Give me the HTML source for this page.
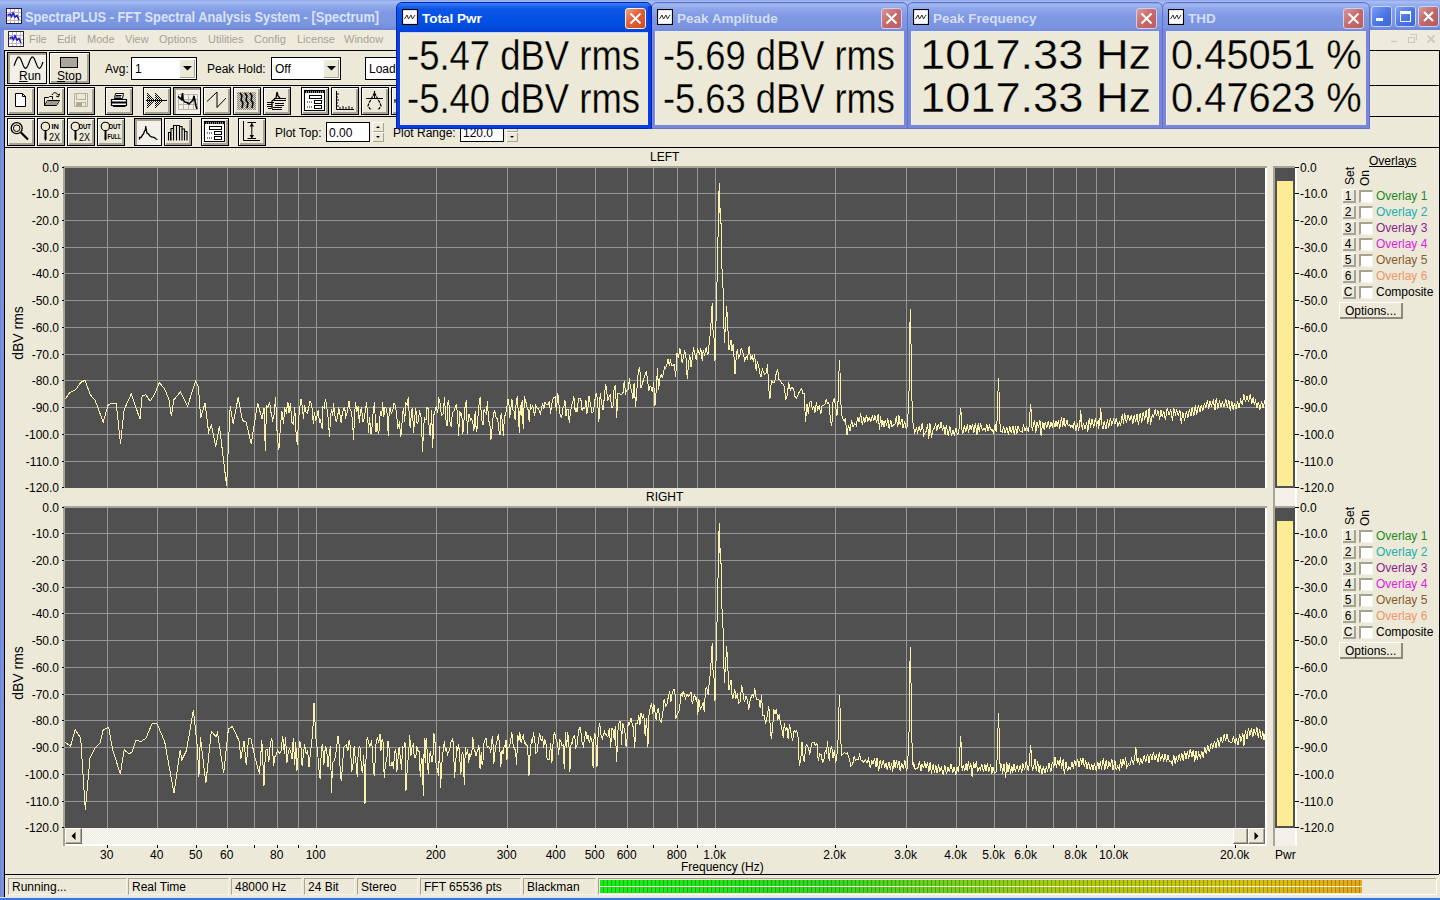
<!DOCTYPE html><html><head><meta charset="utf-8"><style>
html,body{margin:0;padding:0}
body{width:1440px;height:900px;overflow:hidden;background:#ECE9D8;position:relative;font-family:"Liberation Sans",sans-serif;}
body div{position:absolute;box-sizing:border-box}
.t{white-space:nowrap;line-height:1}
svg{position:absolute;left:0;top:0}
</style></head><body>
<div style="left:0px;top:0px;width:1440px;height:30px;background:linear-gradient(#8FA8EC 0px,#A9BEF4 2px,#93ACEC 5px,#7F9AE3 12px,#7C97E0 22px,#7690DC 27px,#6C84D3 30px)"></div>
<svg style="left:6px;top:8px" width="16" height="16" viewBox="0 0 16 16"><rect x="0.5" y="0.5" width="15" height="15" fill="#fff" stroke="#202040"/><path d="M1 4.5H15M1 8.5H15M1 12.5H15M4.5 1V15M8.5 1V15M12.5 1V15" stroke="#C8B0C0" stroke-width="1"/><path d="M1.5 7.5L4 6 5.5 8.5 7 5 9 9 11 7.5 13 12" stroke="#2020C0" stroke-width="1.6" fill="none"/></svg>
<div class="t" style="left:25px;top:10px;font-size:14px;font-weight:bold;color:#D9E3F8;transform:scaleX(0.915);transform-origin:0 0">SpectraPLUS - FFT Spectral Analysis System - [Spectrum]</div>
<div style="left:1371px;top:6px;width:21px;height:21px;border-radius:3px;border:1px solid #C8D4F8;background:linear-gradient(135deg,#7EA0F0,#4D78E6 50%,#3C64D8)">
<div style="left:4px;top:11px;width:7px;height:3px;background:#fff"></div>
</div>
<div style="left:1395px;top:6px;width:21px;height:21px;border-radius:3px;border:1px solid #C8D4F8;background:linear-gradient(135deg,#7EA0F0,#4D78E6 50%,#3C64D8)">
<div style="left:4px;top:4px;width:11px;height:11px;border:1px solid #fff;border-top:3px solid #fff"></div>
</div>
<div style="left:1418px;top:6px;width:21px;height:21px;border-radius:3px;border:1px solid #C8D4F8;background:linear-gradient(135deg,#D49A9A,#C06868 50%,#B85858)">
<svg width="19" height="19" style="left:0;top:0"><path d="M5 5L14 14M14 5L5 14" stroke="#fff" stroke-width="2.2"/></svg>
</div>
<div style="left:0px;top:30px;width:4px;height:870px;background:linear-gradient(90deg,#6A80D6,#8096E0 50%,#7088DA)"></div>
<div style="left:0px;top:897px;width:1440px;height:1px;background:#D8E4F4"></div>
<div style="left:0px;top:898px;width:1440px;height:2px;background:#3A78DC"></div>
<div style="left:4px;top:30px;width:1436px;height:20px;background:#EEEBDD"></div>
<svg style="left:8px;top:31px" width="16" height="16" viewBox="0 0 16 16"><rect x="0.5" y="0.5" width="15" height="15" fill="#fff" stroke="#202040"/><path d="M1 4.5H15M1 8.5H15M1 12.5H15M4.5 1V15M8.5 1V15M12.5 1V15" stroke="#C8B0C0" stroke-width="1"/><path d="M1.5 7.5L4 6 5.5 8.5 7 5 9 9 11 7.5 13 12" stroke="#2020C0" stroke-width="1.6" fill="none"/></svg>
<div class="t" style="left:29px;top:34px;font-size:11px;color:#A6A293">File</div>
<div class="t" style="left:57px;top:34px;font-size:11px;color:#A6A293">Edit</div>
<div class="t" style="left:87px;top:34px;font-size:11px;color:#A6A293">Mode</div>
<div class="t" style="left:125px;top:34px;font-size:11px;color:#A6A293">View</div>
<div class="t" style="left:159px;top:34px;font-size:11px;color:#A6A293">Options</div>
<div class="t" style="left:208px;top:34px;font-size:11px;color:#A6A293">Utilities</div>
<div class="t" style="left:254px;top:34px;font-size:11px;color:#A6A293">Config</div>
<div class="t" style="left:297px;top:34px;font-size:11px;color:#A6A293">License</div>
<div class="t" style="left:344px;top:34px;font-size:11px;color:#A6A293">Window</div>
<svg style="left:1380px;top:28px" width="60" height="16"><path d="M11 13.5H17" stroke="#CFCBBC" stroke-width="1.5"/><path d="M30.5 6.5H36.5V12.5M28.5 9.5H34.5V14.5H28.5Z" stroke="#CFCBBC" fill="none" stroke-width="1.2"/><path d="M47.5 7.5L54.5 14.5M54.5 7.5L47.5 14.5" stroke="#CFCBBC" stroke-width="1.8"/></svg>
<div style="left:4px;top:50px;width:1436px;height:1px;background:#000"></div>
<div style="left:4px;top:50px;width:1px;height:847px;background:#000"></div>
<div style="left:1439px;top:50px;width:1px;height:824px;background:#000"></div>
<div style="left:5px;top:85px;width:1434px;height:1px;background:#000"></div>
<div style="left:5px;top:116px;width:1434px;height:1px;background:#000"></div>
<div style="left:5px;top:147px;width:1434px;height:1px;background:#000"></div>
<div style="left:5px;top:874px;width:1434px;height:1px;background:#000"></div>
<div style="left:7px;top:52px;width:40px;height:32px;border:1px solid #000;box-shadow:inset 2px 2px 0 #A7A392;background:#F2F0E8"></div>
<svg style="left:13px;top:55px" width="32" height="16"><path d="M1.0 10.73 L1.5 9.58 L2.0 8.33 L2.5 7.04 L3.0 5.78 L3.5 4.62 L4.0 3.62 L4.5 2.83 L5.0 2.29 L5.5 2.02 L6.0 2.05 L6.5 2.37 L7.0 2.97 L7.5 3.81 L8.0 4.84 L8.5 6.03 L9.0 7.30 L9.5 8.58 L10.0 9.82 L10.5 10.94 L11.0 11.90 L11.5 12.63 L12.0 13.11 L12.5 13.30 L13.0 13.19 L13.5 12.80 L14.0 12.14 L14.5 11.25 L15.0 10.17 L15.5 8.96 L16.0 7.68 L16.5 6.40 L17.0 5.19 L17.5 4.10 L18.0 3.20 L18.5 2.52 L19.0 2.12 L19.5 2.00 L20.0 2.18 L20.5 2.64 L21.0 3.36 L21.5 4.30 L22.0 5.42 L22.5 6.65 L23.0 7.94 L23.5 9.21 L24.0 10.40 L24.5 11.45 L25.0 12.30 L25.5 12.90 L26.0 13.24 L26.5 13.28 L27.0 13.03 L27.5 12.50 L28.0 11.72 L28.5 10.73 L29.0 9.58 L29.5 8.33 L30.0 7.04" stroke="#000" stroke-width="1.2" fill="none"/></svg>
<div class="t" style="left:19px;top:70px;font-size:12px;color:#000"><u>R</u>un</div>
<div style="left:49px;top:52px;width:41px;height:32px;border:1px solid #000;box-shadow:inset 1px 1px 0 #fff,inset -2px -2px 0 #A7A392;background:#ECE9D8"></div>
<div style="left:60px;top:57px;width:18px;height:11px;border:1px solid #000;background:#A9A598"></div>
<div class="t" style="left:57px;top:70px;font-size:12px;color:#000"><u>S</u>top</div>
<div class="t" style="left:105px;top:63px;font-size:12px;color:#000">Avg:</div>
<div style="left:131px;top:57px;width:66px;height:23px;border:1px solid #000;background:#fff"></div>
<div class="t" style="left:135px;top:63px;font-size:12px;color:#000">1</div>
<div style="left:179px;top:59px;width:16px;height:19px;background:#ECE9D8;box-shadow:inset 1px 1px 0 #fff,inset -1px -1px 0 #A7A392"></div>
<svg style="left:183px;top:66px" width="9" height="5"><path d="M0 0H9L4.5 4.5Z" fill="#000"/></svg>
<div class="t" style="left:207px;top:63px;font-size:12px;color:#000">Peak Hold:</div>
<div style="left:271px;top:57px;width:70px;height:23px;border:1px solid #000;background:#fff"></div>
<div class="t" style="left:275px;top:63px;font-size:12px;color:#000">Off</div>
<div style="left:323px;top:59px;width:16px;height:19px;background:#ECE9D8;box-shadow:inset 1px 1px 0 #fff,inset -1px -1px 0 #A7A392"></div>
<svg style="left:327px;top:66px" width="9" height="5"><path d="M0 0H9L4.5 4.5Z" fill="#000"/></svg>
<div style="left:365px;top:57px;width:40px;height:23px;border:1px solid #000;background:#fff"></div>
<div class="t" style="left:369px;top:63px;font-size:12px;color:#000">Load</div>
<svg style="left:0px;top:0px" width="1" height="1" viewBox="0 0 1 1"><defs><pattern id="dith" width="2" height="2" patternUnits="userSpaceOnUse"><rect width="1" height="1" fill="#000"/><rect x="1" y="1" width="1" height="1" fill="#000"/></pattern><pattern id="dithg" width="2" height="2" patternUnits="userSpaceOnUse"><rect width="2" height="2" fill="#D8D4C8"/><rect width="1" height="1" fill="#8C8A80"/><rect x="1" y="1" width="1" height="1" fill="#8C8A80"/></pattern></defs></svg>
<div style="left:7px;top:87px;width:28px;height:28px;border:1px solid #000;box-shadow:inset 1px 1px 0 #fff,inset -2px -2px 0 #A7A392;background:#ECE9D8"></div>
<div style="left:37px;top:87px;width:28px;height:28px;border:1px solid #000;box-shadow:inset 1px 1px 0 #fff,inset -2px -2px 0 #A7A392;background:#ECE9D8"></div>
<div style="left:67px;top:87px;width:28px;height:28px;border:1px solid #000;box-shadow:inset 1px 1px 0 #fff,inset -2px -2px 0 #A7A392;background:#ECE9D8"></div>
<div style="left:105px;top:87px;width:28px;height:28px;border:1px solid #000;box-shadow:inset 1px 1px 0 #fff,inset -2px -2px 0 #A7A392;background:#ECE9D8"></div>
<div style="left:143px;top:87px;width:28px;height:28px;border:1px solid #000;box-shadow:inset 1px 1px 0 #fff,inset -2px -2px 0 #A7A392;background:#ECE9D8"></div>
<div style="left:173px;top:87px;width:28px;height:28px;border:1px solid #000;box-shadow:inset 2px 2px 0 #A7A392;background:#F2F0E8"></div>
<div style="left:203px;top:87px;width:28px;height:28px;border:1px solid #000;box-shadow:inset 1px 1px 0 #fff,inset -2px -2px 0 #A7A392;background:#ECE9D8"></div>
<div style="left:233px;top:87px;width:28px;height:28px;border:1px solid #000;box-shadow:inset 1px 1px 0 #fff,inset -2px -2px 0 #A7A392;background:#ECE9D8"></div>
<div style="left:263px;top:87px;width:28px;height:28px;border:1px solid #000;box-shadow:inset 1px 1px 0 #fff,inset -2px -2px 0 #A7A392;background:#ECE9D8"></div>
<div style="left:301px;top:87px;width:28px;height:28px;border:1px solid #000;box-shadow:inset 1px 1px 0 #fff,inset -2px -2px 0 #A7A392;background:#ECE9D8"></div>
<div style="left:331px;top:87px;width:28px;height:28px;border:1px solid #000;box-shadow:inset 1px 1px 0 #fff,inset -2px -2px 0 #A7A392;background:#ECE9D8"></div>
<div style="left:361px;top:87px;width:28px;height:28px;border:1px solid #000;box-shadow:inset 1px 1px 0 #fff,inset -2px -2px 0 #A7A392;background:#ECE9D8"></div>
<div style="left:391px;top:87px;width:28px;height:28px;border:1px solid #000;box-shadow:inset 1px 1px 0 #fff,inset -2px -2px 0 #A7A392;background:#ECE9D8"></div>
<div style="left:7px;top:118px;width:28px;height:28px;border:1px solid #000;box-shadow:inset 1px 1px 0 #fff,inset -2px -2px 0 #A7A392;background:#ECE9D8"></div>
<div style="left:37px;top:118px;width:28px;height:28px;border:1px solid #000;box-shadow:inset 1px 1px 0 #fff,inset -2px -2px 0 #A7A392;background:#ECE9D8"></div>
<div style="left:67px;top:118px;width:28px;height:28px;border:1px solid #000;box-shadow:inset 1px 1px 0 #fff,inset -2px -2px 0 #A7A392;background:#ECE9D8"></div>
<div style="left:97px;top:118px;width:28px;height:28px;border:1px solid #000;box-shadow:inset 1px 1px 0 #fff,inset -2px -2px 0 #A7A392;background:#ECE9D8"></div>
<div style="left:134px;top:118px;width:28px;height:28px;border:1px solid #000;box-shadow:inset 2px 2px 0 #A7A392;background:#F2F0E8"></div>
<div style="left:164px;top:118px;width:28px;height:28px;border:1px solid #000;box-shadow:inset 1px 1px 0 #fff,inset -2px -2px 0 #A7A392;background:#ECE9D8"></div>
<div style="left:201px;top:118px;width:28px;height:28px;border:1px solid #000;box-shadow:inset 1px 1px 0 #fff,inset -2px -2px 0 #A7A392;background:#ECE9D8"></div>
<div style="left:238px;top:118px;width:28px;height:28px;border:1px solid #000;box-shadow:inset 1px 1px 0 #fff,inset -2px -2px 0 #A7A392;background:#ECE9D8"></div>
<svg style="left:7px;top:87px" width="28" height="28" viewBox="0 0 28 28"><path d="M8.5 6.5H15.5L18.5 9.5V19.5H8.5Z" fill="#fff" stroke="#000"/><path d="M15.5 6.5V9.5H18.5" stroke="#000" fill="none" stroke-width="1"/></svg>
<svg style="left:37px;top:87px" width="28" height="28" viewBox="0 0 28 28"><path d="M7.5 10.5H11.5L12.5 9.5H15.5V12.5" fill="none" stroke="#000"/><path d="M7.5 10.5V18.5L10.5 13.5H22.5L19.5 18.5H7.5" fill="#fff" stroke="#000"/><path d="M8.5 18L11 14H22L19 18Z" fill="#9E9A8C"/><path d="M15 8C16 5 20 5 21 8L22.5 7L21.5 10L19 9" stroke="#000" fill="none" stroke-width="1"/></svg>
<svg style="left:67px;top:87px" width="28" height="28" viewBox="0 0 28 28"><path d="M7.5 6.5H20.5V19.5H7.5Z" fill="none" stroke="#B4B0A2"/><path d="M9.5 6.5V12.5H18.5V6.5M9.5 19.5V15.5H18.5V19.5" fill="none" stroke="#B4B0A2"/><rect x="10" y="16" width="5" height="3" fill="#A8A496"/></svg>
<svg style="left:105px;top:87px" width="28" height="28" viewBox="0 0 28 28"><path d="M10.5 6.5H18.5L17.5 11.5H9.5Z" fill="#fff" stroke="#000"/><path d="M11 8.5H16.5M10.5 10H16" stroke="#000"/><path d="M6.5 12.5H21.5V18.5H6.5Z" fill="#fff" stroke="#000" stroke-width="1.2"/><path d="M7 15.5H21" stroke="#000" stroke-width="2"/><path d="M8 19.5H20.5" stroke="#000"/></svg>
<svg style="left:143px;top:87px" width="28" height="28" viewBox="0 0 28 28"><path d="M4 5L12 13.5 4 22Z" fill="url(#dith)"/><path d="M12 5L20 13.5 12 22Z" fill="url(#dith)"/><path d="M3 13.5H24" stroke="#000"/></svg>
<svg style="left:173px;top:87px" width="28" height="28" viewBox="0 0 28 28"><path d="M5.5 7.5H24.5V22.5H5.5ZM5.5 12.5H24.5M5.5 17.5H24.5M10.5 7.5V22.5M15.5 7.5V22.5M20.5 7.5V22.5" fill="none" stroke="#B8B4A4"/><path d="M5 9.5L7 11 8.5 12.5 9.5 6 10 13 12 15 14 15.5 16 17 18 15 20 13 21 9 22 14 23 19 24 22" stroke="#000" stroke-width="1.6" fill="none"/></svg>
<svg style="left:203px;top:87px" width="28" height="28" viewBox="0 0 28 28"><path d="M4 14.5L14 5V20.5L23 11" stroke="#000" fill="none" stroke-width="1"/></svg>
<svg style="left:233px;top:87px" width="28" height="28" viewBox="0 0 28 28"><rect x="4" y="5" width="19" height="18" fill="url(#dithg)"/><path d="M7 6L9 9 8 13 10 16 9 21M12 6L14 9 13 13 15 16 14 21M17 6L19 9 18 13 20 16 19 21" stroke="#000" stroke-width="1.5" fill="none"/></svg>
<svg style="left:263px;top:87px" width="28" height="28" viewBox="0 0 28 28"><path d="M4 15.5H11M4 17.5H9M4 19.5H9M5 21.5H8M11 11.5H23M11 13.5H23M12 16.5H21M12 18.5H21M10 20.5H19M9 22.5H19" stroke="#000"/><path d="M9 22V14L13 11 14 5 15 9 17 11" stroke="#000" fill="none" stroke-width="1.3"/></svg>
<svg style="left:301px;top:87px" width="28" height="28" viewBox="0 0 28 28"><rect x="3.5" y="3.5" width="20" height="20" fill="#fff" stroke="#000"/><rect x="4" y="4" width="19" height="2" fill="#000"/><path d="M5 5H22" stroke="#fff" stroke-dasharray="1 1"/><rect x="8.5" y="8.5" width="12" height="3" fill="none" stroke="#000"/><rect x="13.5" y="13.5" width="7" height="3" fill="none" stroke="#000"/><rect x="13.5" y="18.5" width="7" height="3" fill="none" stroke="#000"/><path d="M6 15H11M6 20H11" stroke="#000" stroke-dasharray="1 1"/></svg>
<svg style="left:201px;top:118px" width="28" height="28" viewBox="0 0 28 28"><rect x="3.5" y="3.5" width="20" height="20" fill="#fff" stroke="#000"/><rect x="4" y="4" width="19" height="2" fill="#000"/><path d="M5 5H22" stroke="#fff" stroke-dasharray="1 1"/><rect x="8.5" y="8.5" width="12" height="3" fill="none" stroke="#000"/><rect x="13.5" y="13.5" width="7" height="3" fill="none" stroke="#000"/><rect x="13.5" y="18.5" width="7" height="3" fill="none" stroke="#000"/><path d="M6 15H11M6 20H11" stroke="#000" stroke-dasharray="1 1"/></svg>
<svg style="left:331px;top:87px" width="28" height="28" viewBox="0 0 28 28"><path d="M5.5 4V22.5H23" stroke="#000" fill="none" stroke-width="1"/><path d="M5 7H8M5 10H7M5 13H8M5 16H7M5 19H8M9 22V20M12 22V19M15 22V20M18 22V19M21 22V20" stroke="#000"/></svg>
<svg style="left:361px;top:87px" width="28" height="28" viewBox="0 0 28 28"><path d="M13.5 4V12M5 11.5H22" stroke="#000" stroke-width="1.2"/><path d="M13.5 6L8 16 7 19 9 22 11 22M13.5 6L19 16 20 19 18 22 16 22" stroke="#000" stroke-width="1.2" fill="none" stroke-dasharray="3 1"/></svg>
<svg style="left:391px;top:87px" width="5" height="28" viewBox="0 0 5 28"><path d="M3 13H5M4 13V16" stroke="#000"/></svg>
<svg style="left:7px;top:118px" width="28" height="28" viewBox="0 0 28 28"><circle cx="9.7" cy="10.2" r="5.5" fill="none" stroke="#000" stroke-width="1.3"/><circle cx="9.7" cy="10.2" r="3.3" fill="none" stroke="#000"/><path d="M14 14.5L21 21.5" stroke="#000" stroke-width="2.2"/></svg>
<svg style="left:37px;top:118px" width="28" height="28" viewBox="0 0 28 28"><circle cx="8.4" cy="8.4" r="4.2" fill="none" stroke="#000" stroke-width="1.1"/><path d="M7.6 13H9.4L9.6 21L8.5 23L7.4 21Z" fill="#000"/><text x="14.5" y="11" textLength="7.5" lengthAdjust="spacingAndGlyphs" font-family="Liberation Sans" font-weight="bold" font-size="6.5">IN</text><text x="12" y="22.5" textLength="11" lengthAdjust="spacingAndGlyphs" font-family="Liberation Sans" font-size="11">2X</text></svg>
<svg style="left:67px;top:118px" width="28" height="28" viewBox="0 0 28 28"><circle cx="8.4" cy="8.4" r="4.2" fill="none" stroke="#000" stroke-width="1.1"/><path d="M7.6 13H9.4L9.6 21L8.5 23L7.4 21Z" fill="#000"/><text x="11.5" y="11" textLength="12.5" lengthAdjust="spacingAndGlyphs" font-family="Liberation Sans" font-weight="bold" font-size="6.5">OUT</text><text x="12" y="22.5" textLength="11" lengthAdjust="spacingAndGlyphs" font-family="Liberation Sans" font-size="11">2X</text></svg>
<svg style="left:97px;top:118px" width="28" height="28" viewBox="0 0 28 28"><circle cx="8.4" cy="8.4" r="4.2" fill="none" stroke="#000" stroke-width="1.1"/><path d="M7.6 13H9.4L9.6 21L8.5 23L7.4 21Z" fill="#000"/><text x="11.5" y="11" textLength="12.5" lengthAdjust="spacingAndGlyphs" font-family="Liberation Sans" font-weight="bold" font-size="6.5">OUT</text><text x="10.5" y="20.5" textLength="13.5" lengthAdjust="spacingAndGlyphs" font-family="Liberation Sans" font-weight="bold" font-size="6.5">FULL</text></svg>
<svg style="left:134px;top:118px" width="28" height="28" viewBox="0 0 28 28"><path d="M5.5 21.5V19.5H7L8.5 17 9.5 16 10.5 13 11.5 11.5 11.7 8 12.3 12 13 15 14.5 16 16 18 17.5 19 20.5 19.5 22 21 23.5 21.5" stroke="#000" stroke-width="1.3" fill="none"/></svg>
<svg style="left:164px;top:118px" width="28" height="28" viewBox="0 0 28 28"><path d="M4.5 22.5V14.5H6.5V22.5M7 22.5V10.5H9.5V22.5M9.5 22.5V7.5H12.5V22.5M12.5 22.5V7.5H15.5V22.5M15.5 22.5V8.5H18V22.5M18 22.5V11H20.5V22.5M20.5 22.5V13.5H23V22.5" stroke="#000" fill="none" stroke-width="1.1"/></svg>
<svg style="left:238px;top:118px" width="28" height="28" viewBox="0 0 28 28"><path d="M5.5 3V22.5H22" stroke="#000" fill="none" stroke-width="1"/><path d="M9.5 4.5H18M9.5 20.5H18M13.8 5V20" stroke="#000"/><path d="M11.5 8.5L13.8 5 16 8.5ZM11.5 17L13.8 20.5 16 17Z" fill="#000"/></svg>
<div class="t" style="left:275px;top:127px;font-size:12px;color:#000">Plot Top:</div>
<div style="left:326px;top:122px;width:44px;height:20px;border:1px solid #000;background:#fff"></div>
<div class="t" style="left:329px;top:127px;font-size:12px;color:#000">0.00</div>
<div style="left:372px;top:122px;width:12px;height:10px;background:#ECE9D8;box-shadow:inset 1px 1px 0 #fff,inset -1px -1px 0 #A7A392"></div>
<div style="left:372px;top:132px;width:12px;height:10px;background:#ECE9D8;box-shadow:inset 1px 1px 0 #fff,inset -1px -1px 0 #A7A392"></div>
<svg style="left:372px;top:122px" width="12" height="20" viewBox="0 0 12 20"><path d="M4 6H8L6 4Z M4 14H8L6 16Z" fill="#000"/></svg>
<div class="t" style="left:393px;top:127px;font-size:12px;color:#000">Plot Range:</div>
<div style="left:460px;top:122px;width:44px;height:20px;border:1px solid #000;background:#fff"></div>
<div class="t" style="left:463px;top:127px;font-size:12px;color:#000">120.0</div>
<div style="left:506px;top:122px;width:12px;height:10px;background:#ECE9D8;box-shadow:inset 1px 1px 0 #fff,inset -1px -1px 0 #A7A392"></div>
<div style="left:506px;top:132px;width:12px;height:10px;background:#ECE9D8;box-shadow:inset 1px 1px 0 #fff,inset -1px -1px 0 #A7A392"></div>
<svg style="left:506px;top:122px" width="12" height="20" viewBox="0 0 12 20"><path d="M4 6H8L6 4Z M4 14H8L6 16Z" fill="#000"/></svg>
<div style="left:8px;top:878px;width:119px;height:17px;border-top:1px solid #A7A392;border-left:1px solid #A7A392;border-right:1px solid #F6F4EE;border-bottom:1px solid #F6F4EE"></div>
<div class="t" style="left:12px;top:881px;font-size:12px;color:#000">Running...</div>
<div style="left:128px;top:878px;width:101px;height:17px;border-top:1px solid #A7A392;border-left:1px solid #A7A392;border-right:1px solid #F6F4EE;border-bottom:1px solid #F6F4EE"></div>
<div class="t" style="left:132px;top:881px;font-size:12px;color:#000">Real Time</div>
<div style="left:231px;top:878px;width:71px;height:17px;border-top:1px solid #A7A392;border-left:1px solid #A7A392;border-right:1px solid #F6F4EE;border-bottom:1px solid #F6F4EE"></div>
<div class="t" style="left:235px;top:881px;font-size:12px;color:#000">48000 Hz</div>
<div style="left:304px;top:878px;width:51px;height:17px;border-top:1px solid #A7A392;border-left:1px solid #A7A392;border-right:1px solid #F6F4EE;border-bottom:1px solid #F6F4EE"></div>
<div class="t" style="left:308px;top:881px;font-size:12px;color:#000">24 Bit</div>
<div style="left:357px;top:878px;width:61px;height:17px;border-top:1px solid #A7A392;border-left:1px solid #A7A392;border-right:1px solid #F6F4EE;border-bottom:1px solid #F6F4EE"></div>
<div class="t" style="left:361px;top:881px;font-size:12px;color:#000">Stereo</div>
<div style="left:420px;top:878px;width:101px;height:17px;border-top:1px solid #A7A392;border-left:1px solid #A7A392;border-right:1px solid #F6F4EE;border-bottom:1px solid #F6F4EE"></div>
<div class="t" style="left:424px;top:881px;font-size:12px;color:#000">FFT 65536 pts</div>
<div style="left:523px;top:878px;width:73px;height:17px;border-top:1px solid #A7A392;border-left:1px solid #A7A392;border-right:1px solid #F6F4EE;border-bottom:1px solid #F6F4EE"></div>
<div class="t" style="left:527px;top:881px;font-size:12px;color:#000">Blackman</div>
<div style="left:598px;top:878px;width:839px;height:17px;border-top:1px solid #A7A392;border-left:1px solid #A7A392;border-right:1px solid #fff;border-bottom:1px solid #fff"></div>
<div style="left:600px;top:880px;width:762px;height:13px;background:linear-gradient(90deg,#14F014 0%,#30D820 30%,#A8CC10 60%,#D8C010 85%,#E8A818 100%)"></div>
<div style="left:600px;top:880px;width:762px;height:13px;background:repeating-linear-gradient(90deg,rgba(0,0,0,0) 0px,rgba(0,0,0,0) 3px,rgba(40,60,0,0.35) 3px,rgba(40,60,0,0.35) 4px)"></div>
<div style="left:600px;top:886px;width:762px;height:1px;background:#F4F8E0"></div>
<div style="left:63px;top:166px;width:1204px;height:322px;background:#fff;border-top:2px solid #A8A498;border-left:2px solid #A8A498"></div>
<div style="left:65px;top:168px;width:1200px;height:320px;background:#505050"></div>
<div style="left:65px;top:193px;width:1200px;height:1px;background:#969696"></div>
<div style="left:65px;top:220px;width:1200px;height:1px;background:#969696"></div>
<div style="left:65px;top:247px;width:1200px;height:1px;background:#969696"></div>
<div style="left:65px;top:273px;width:1200px;height:1px;background:#969696"></div>
<div style="left:65px;top:300px;width:1200px;height:1px;background:#969696"></div>
<div style="left:65px;top:327px;width:1200px;height:1px;background:#969696"></div>
<div style="left:65px;top:354px;width:1200px;height:1px;background:#969696"></div>
<div style="left:65px;top:380px;width:1200px;height:1px;background:#969696"></div>
<div style="left:65px;top:407px;width:1200px;height:1px;background:#969696"></div>
<div style="left:65px;top:434px;width:1200px;height:1px;background:#969696"></div>
<div style="left:65px;top:461px;width:1200px;height:1px;background:#969696"></div>
<div style="left:107px;top:168px;width:1px;height:320px;background:#969696"></div>
<div style="left:157px;top:168px;width:1px;height:320px;background:#969696"></div>
<div style="left:196px;top:168px;width:1px;height:320px;background:#969696"></div>
<div style="left:227px;top:168px;width:1px;height:320px;background:#969696"></div>
<div style="left:254px;top:168px;width:1px;height:320px;background:#969696"></div>
<div style="left:277px;top:168px;width:1px;height:320px;background:#969696"></div>
<div style="left:298px;top:168px;width:1px;height:320px;background:#969696"></div>
<div style="left:316px;top:168px;width:1px;height:320px;background:#969696"></div>
<div style="left:436px;top:168px;width:1px;height:320px;background:#969696"></div>
<div style="left:507px;top:168px;width:1px;height:320px;background:#969696"></div>
<div style="left:556px;top:168px;width:1px;height:320px;background:#969696"></div>
<div style="left:595px;top:168px;width:1px;height:320px;background:#969696"></div>
<div style="left:627px;top:168px;width:1px;height:320px;background:#969696"></div>
<div style="left:653px;top:168px;width:1px;height:320px;background:#969696"></div>
<div style="left:677px;top:168px;width:1px;height:320px;background:#969696"></div>
<div style="left:697px;top:168px;width:1px;height:320px;background:#969696"></div>
<div style="left:715px;top:168px;width:1px;height:320px;background:#969696"></div>
<div style="left:835px;top:168px;width:1px;height:320px;background:#969696"></div>
<div style="left:906px;top:168px;width:1px;height:320px;background:#969696"></div>
<div style="left:956px;top:168px;width:1px;height:320px;background:#969696"></div>
<div style="left:994px;top:168px;width:1px;height:320px;background:#969696"></div>
<div style="left:1026px;top:168px;width:1px;height:320px;background:#969696"></div>
<div style="left:1053px;top:168px;width:1px;height:320px;background:#969696"></div>
<div style="left:1076px;top:168px;width:1px;height:320px;background:#969696"></div>
<div style="left:1096px;top:168px;width:1px;height:320px;background:#969696"></div>
<div style="left:1114px;top:168px;width:1px;height:320px;background:#969696"></div>
<div style="left:1235px;top:168px;width:1px;height:320px;background:#969696"></div>
<div style="left:62px;top:167px;width:2px;height:1px;background:#000"></div>
<div class="t" style="left:0px;width:59px;text-align:right;top:162px;font-size:12px;color:#000">0.0</div>
<div style="left:62px;top:193px;width:2px;height:1px;background:#000"></div>
<div class="t" style="left:0px;width:59px;text-align:right;top:188px;font-size:12px;color:#000">-10.0</div>
<div style="left:62px;top:220px;width:2px;height:1px;background:#000"></div>
<div class="t" style="left:0px;width:59px;text-align:right;top:215px;font-size:12px;color:#000">-20.0</div>
<div style="left:62px;top:247px;width:2px;height:1px;background:#000"></div>
<div class="t" style="left:0px;width:59px;text-align:right;top:242px;font-size:12px;color:#000">-30.0</div>
<div style="left:62px;top:273px;width:2px;height:1px;background:#000"></div>
<div class="t" style="left:0px;width:59px;text-align:right;top:268px;font-size:12px;color:#000">-40.0</div>
<div style="left:62px;top:300px;width:2px;height:1px;background:#000"></div>
<div class="t" style="left:0px;width:59px;text-align:right;top:295px;font-size:12px;color:#000">-50.0</div>
<div style="left:62px;top:327px;width:2px;height:1px;background:#000"></div>
<div class="t" style="left:0px;width:59px;text-align:right;top:322px;font-size:12px;color:#000">-60.0</div>
<div style="left:62px;top:354px;width:2px;height:1px;background:#000"></div>
<div class="t" style="left:0px;width:59px;text-align:right;top:349px;font-size:12px;color:#000">-70.0</div>
<div style="left:62px;top:380px;width:2px;height:1px;background:#000"></div>
<div class="t" style="left:0px;width:59px;text-align:right;top:375px;font-size:12px;color:#000">-80.0</div>
<div style="left:62px;top:407px;width:2px;height:1px;background:#000"></div>
<div class="t" style="left:0px;width:59px;text-align:right;top:402px;font-size:12px;color:#000">-90.0</div>
<div style="left:62px;top:434px;width:2px;height:1px;background:#000"></div>
<div class="t" style="left:0px;width:59px;text-align:right;top:429px;font-size:12px;color:#000">-100.0</div>
<div style="left:62px;top:461px;width:2px;height:1px;background:#000"></div>
<div class="t" style="left:0px;width:59px;text-align:right;top:456px;font-size:12px;color:#000">-110.0</div>
<div style="left:62px;top:487px;width:2px;height:1px;background:#000"></div>
<div class="t" style="left:0px;width:59px;text-align:right;top:482px;font-size:12px;color:#000">-120.0</div>
<div class="t" style="left:-17px;top:326px;width:70px;height:14px;text-align:center;font-size:14px;color:#000;transform:rotate(-90deg)">dBV rms</div>
<div style="left:63px;top:506px;width:1204px;height:322px;background:#fff;border-top:2px solid #A8A498;border-left:2px solid #A8A498"></div>
<div style="left:65px;top:508px;width:1200px;height:320px;background:#505050"></div>
<div style="left:65px;top:533px;width:1200px;height:1px;background:#969696"></div>
<div style="left:65px;top:560px;width:1200px;height:1px;background:#969696"></div>
<div style="left:65px;top:587px;width:1200px;height:1px;background:#969696"></div>
<div style="left:65px;top:613px;width:1200px;height:1px;background:#969696"></div>
<div style="left:65px;top:640px;width:1200px;height:1px;background:#969696"></div>
<div style="left:65px;top:667px;width:1200px;height:1px;background:#969696"></div>
<div style="left:65px;top:694px;width:1200px;height:1px;background:#969696"></div>
<div style="left:65px;top:720px;width:1200px;height:1px;background:#969696"></div>
<div style="left:65px;top:747px;width:1200px;height:1px;background:#969696"></div>
<div style="left:65px;top:774px;width:1200px;height:1px;background:#969696"></div>
<div style="left:65px;top:801px;width:1200px;height:1px;background:#969696"></div>
<div style="left:107px;top:508px;width:1px;height:320px;background:#969696"></div>
<div style="left:157px;top:508px;width:1px;height:320px;background:#969696"></div>
<div style="left:196px;top:508px;width:1px;height:320px;background:#969696"></div>
<div style="left:227px;top:508px;width:1px;height:320px;background:#969696"></div>
<div style="left:254px;top:508px;width:1px;height:320px;background:#969696"></div>
<div style="left:277px;top:508px;width:1px;height:320px;background:#969696"></div>
<div style="left:298px;top:508px;width:1px;height:320px;background:#969696"></div>
<div style="left:316px;top:508px;width:1px;height:320px;background:#969696"></div>
<div style="left:436px;top:508px;width:1px;height:320px;background:#969696"></div>
<div style="left:507px;top:508px;width:1px;height:320px;background:#969696"></div>
<div style="left:556px;top:508px;width:1px;height:320px;background:#969696"></div>
<div style="left:595px;top:508px;width:1px;height:320px;background:#969696"></div>
<div style="left:627px;top:508px;width:1px;height:320px;background:#969696"></div>
<div style="left:653px;top:508px;width:1px;height:320px;background:#969696"></div>
<div style="left:677px;top:508px;width:1px;height:320px;background:#969696"></div>
<div style="left:697px;top:508px;width:1px;height:320px;background:#969696"></div>
<div style="left:715px;top:508px;width:1px;height:320px;background:#969696"></div>
<div style="left:835px;top:508px;width:1px;height:320px;background:#969696"></div>
<div style="left:906px;top:508px;width:1px;height:320px;background:#969696"></div>
<div style="left:956px;top:508px;width:1px;height:320px;background:#969696"></div>
<div style="left:994px;top:508px;width:1px;height:320px;background:#969696"></div>
<div style="left:1026px;top:508px;width:1px;height:320px;background:#969696"></div>
<div style="left:1053px;top:508px;width:1px;height:320px;background:#969696"></div>
<div style="left:1076px;top:508px;width:1px;height:320px;background:#969696"></div>
<div style="left:1096px;top:508px;width:1px;height:320px;background:#969696"></div>
<div style="left:1114px;top:508px;width:1px;height:320px;background:#969696"></div>
<div style="left:1235px;top:508px;width:1px;height:320px;background:#969696"></div>
<div style="left:62px;top:507px;width:2px;height:1px;background:#000"></div>
<div class="t" style="left:0px;width:59px;text-align:right;top:502px;font-size:12px;color:#000">0.0</div>
<div style="left:62px;top:533px;width:2px;height:1px;background:#000"></div>
<div class="t" style="left:0px;width:59px;text-align:right;top:528px;font-size:12px;color:#000">-10.0</div>
<div style="left:62px;top:560px;width:2px;height:1px;background:#000"></div>
<div class="t" style="left:0px;width:59px;text-align:right;top:555px;font-size:12px;color:#000">-20.0</div>
<div style="left:62px;top:587px;width:2px;height:1px;background:#000"></div>
<div class="t" style="left:0px;width:59px;text-align:right;top:582px;font-size:12px;color:#000">-30.0</div>
<div style="left:62px;top:613px;width:2px;height:1px;background:#000"></div>
<div class="t" style="left:0px;width:59px;text-align:right;top:608px;font-size:12px;color:#000">-40.0</div>
<div style="left:62px;top:640px;width:2px;height:1px;background:#000"></div>
<div class="t" style="left:0px;width:59px;text-align:right;top:635px;font-size:12px;color:#000">-50.0</div>
<div style="left:62px;top:667px;width:2px;height:1px;background:#000"></div>
<div class="t" style="left:0px;width:59px;text-align:right;top:662px;font-size:12px;color:#000">-60.0</div>
<div style="left:62px;top:694px;width:2px;height:1px;background:#000"></div>
<div class="t" style="left:0px;width:59px;text-align:right;top:689px;font-size:12px;color:#000">-70.0</div>
<div style="left:62px;top:720px;width:2px;height:1px;background:#000"></div>
<div class="t" style="left:0px;width:59px;text-align:right;top:715px;font-size:12px;color:#000">-80.0</div>
<div style="left:62px;top:747px;width:2px;height:1px;background:#000"></div>
<div class="t" style="left:0px;width:59px;text-align:right;top:742px;font-size:12px;color:#000">-90.0</div>
<div style="left:62px;top:774px;width:2px;height:1px;background:#000"></div>
<div class="t" style="left:0px;width:59px;text-align:right;top:769px;font-size:12px;color:#000">-100.0</div>
<div style="left:62px;top:801px;width:2px;height:1px;background:#000"></div>
<div class="t" style="left:0px;width:59px;text-align:right;top:796px;font-size:12px;color:#000">-110.0</div>
<div style="left:62px;top:827px;width:2px;height:1px;background:#000"></div>
<div class="t" style="left:0px;width:59px;text-align:right;top:822px;font-size:12px;color:#000">-120.0</div>
<div class="t" style="left:-17px;top:666px;width:70px;height:14px;text-align:center;font-size:14px;color:#000;transform:rotate(-90deg)">dBV rms</div>
<div class="t" style="left:650px;top:151px;font-size:12px;color:#000">LEFT</div>
<div class="t" style="left:646px;top:491px;font-size:12px;color:#000">RIGHT</div>
<div style="left:63px;top:828px;width:1204px;height:18px;background:#fff;border-left:2px solid #A8A498"></div>
<div style="left:65px;top:828px;width:1200px;height:16px;background:repeating-conic-gradient(#FBFAF6 0% 25%,#ECE9DF 0% 50%) 0 0/2px 2px"></div>
<div style="left:65px;top:828px;width:17px;height:16px;background:#ECE9D8;border-top:1px solid #fff;border-left:1px solid #fff;border-right:1px solid #716F64;border-bottom:1px solid #716F64;box-shadow:inset -1px -1px 0 #ACA899"></div>
<svg style="left:65px;top:828px" width="17" height="16" viewBox="0 0 17 16"><path d="M10.5 4.0V12.0L6.5 8.0Z" fill="#000"/></svg>
<div style="left:1233px;top:828px;width:15px;height:16px;background:#ECE9D8;border-top:1px solid #fff;border-left:1px solid #fff;border-right:1px solid #716F64;border-bottom:1px solid #716F64;box-shadow:inset -1px -1px 0 #ACA899"></div>
<div style="left:1248px;top:828px;width:17px;height:16px;background:#ECE9D8;border-top:1px solid #fff;border-left:1px solid #fff;border-right:1px solid #716F64;border-bottom:1px solid #716F64;box-shadow:inset -1px -1px 0 #ACA899"></div>
<svg style="left:1248px;top:828px" width="17" height="16" viewBox="0 0 17 16"><path d="M6.5 4.0V12.0L10.5 8.0Z" fill="#000"/></svg>
<div style="left:107px;top:845px;width:1px;height:3px;background:#000"></div>
<div style="left:157px;top:845px;width:1px;height:3px;background:#000"></div>
<div style="left:196px;top:845px;width:1px;height:3px;background:#000"></div>
<div style="left:227px;top:845px;width:1px;height:3px;background:#000"></div>
<div style="left:254px;top:845px;width:1px;height:3px;background:#000"></div>
<div style="left:277px;top:845px;width:1px;height:3px;background:#000"></div>
<div style="left:298px;top:845px;width:1px;height:3px;background:#000"></div>
<div style="left:316px;top:845px;width:1px;height:3px;background:#000"></div>
<div style="left:436px;top:845px;width:1px;height:3px;background:#000"></div>
<div style="left:507px;top:845px;width:1px;height:3px;background:#000"></div>
<div style="left:556px;top:845px;width:1px;height:3px;background:#000"></div>
<div style="left:595px;top:845px;width:1px;height:3px;background:#000"></div>
<div style="left:627px;top:845px;width:1px;height:3px;background:#000"></div>
<div style="left:653px;top:845px;width:1px;height:3px;background:#000"></div>
<div style="left:677px;top:845px;width:1px;height:3px;background:#000"></div>
<div style="left:697px;top:845px;width:1px;height:3px;background:#000"></div>
<div style="left:715px;top:845px;width:1px;height:3px;background:#000"></div>
<div style="left:835px;top:845px;width:1px;height:3px;background:#000"></div>
<div style="left:906px;top:845px;width:1px;height:3px;background:#000"></div>
<div style="left:956px;top:845px;width:1px;height:3px;background:#000"></div>
<div style="left:994px;top:845px;width:1px;height:3px;background:#000"></div>
<div style="left:1026px;top:845px;width:1px;height:3px;background:#000"></div>
<div style="left:1053px;top:845px;width:1px;height:3px;background:#000"></div>
<div style="left:1076px;top:845px;width:1px;height:3px;background:#000"></div>
<div style="left:1096px;top:845px;width:1px;height:3px;background:#000"></div>
<div style="left:1114px;top:845px;width:1px;height:3px;background:#000"></div>
<div style="left:1235px;top:845px;width:1px;height:3px;background:#000"></div>
<div class="t" style="left:66.7px;width:80px;text-align:center;top:849px;font-size:12px;color:#000">30</div>
<div class="t" style="left:116.7px;width:80px;text-align:center;top:849px;font-size:12px;color:#000">40</div>
<div class="t" style="left:155.7px;width:80px;text-align:center;top:849px;font-size:12px;color:#000">50</div>
<div class="t" style="left:186.7px;width:80px;text-align:center;top:849px;font-size:12px;color:#000">60</div>
<div class="t" style="left:236.7px;width:80px;text-align:center;top:849px;font-size:12px;color:#000">80</div>
<div class="t" style="left:275.7px;width:80px;text-align:center;top:849px;font-size:12px;color:#000">100</div>
<div class="t" style="left:395.7px;width:80px;text-align:center;top:849px;font-size:12px;color:#000">200</div>
<div class="t" style="left:466.7px;width:80px;text-align:center;top:849px;font-size:12px;color:#000">300</div>
<div class="t" style="left:515.7px;width:80px;text-align:center;top:849px;font-size:12px;color:#000">400</div>
<div class="t" style="left:554.7px;width:80px;text-align:center;top:849px;font-size:12px;color:#000">500</div>
<div class="t" style="left:586.7px;width:80px;text-align:center;top:849px;font-size:12px;color:#000">600</div>
<div class="t" style="left:636.7px;width:80px;text-align:center;top:849px;font-size:12px;color:#000">800</div>
<div class="t" style="left:674.7px;width:80px;text-align:center;top:849px;font-size:12px;color:#000">1.0k</div>
<div class="t" style="left:794.7px;width:80px;text-align:center;top:849px;font-size:12px;color:#000">2.0k</div>
<div class="t" style="left:865.7px;width:80px;text-align:center;top:849px;font-size:12px;color:#000">3.0k</div>
<div class="t" style="left:915.7px;width:80px;text-align:center;top:849px;font-size:12px;color:#000">4.0k</div>
<div class="t" style="left:953.7px;width:80px;text-align:center;top:849px;font-size:12px;color:#000">5.0k</div>
<div class="t" style="left:985.7px;width:80px;text-align:center;top:849px;font-size:12px;color:#000">6.0k</div>
<div class="t" style="left:1035.7px;width:80px;text-align:center;top:849px;font-size:12px;color:#000">8.0k</div>
<div class="t" style="left:1073.7px;width:80px;text-align:center;top:849px;font-size:12px;color:#000">10.0k</div>
<div class="t" style="left:1194.7px;width:80px;text-align:center;top:849px;font-size:12px;color:#000">20.0k</div>
<div class="t" style="left:681px;top:861px;font-size:12px;color:#000">Frequency (Hz)</div>
<div style="left:1273px;top:166px;width:24px;height:680px;background:#F2F0E8;border-left:2px solid #A8A498;border-right:2px solid #fff"></div>
<div style="left:1275px;top:166px;width:20px;height:2px;background:#A8A498"></div>
<div style="left:1275px;top:168px;width:20px;height:320px;background:#505050"></div>
<div style="left:1277px;top:181px;width:16px;height:305px;background:#FCEC94"></div>
<div style="left:1295px;top:167px;width:4px;height:1px;background:#000"></div>
<div class="t" style="left:1300px;top:162px;font-size:12px;color:#000">0.0</div>
<div style="left:1295px;top:193px;width:4px;height:1px;background:#000"></div>
<div class="t" style="left:1300px;top:188px;font-size:12px;color:#000">-10.0</div>
<div style="left:1295px;top:220px;width:4px;height:1px;background:#000"></div>
<div class="t" style="left:1300px;top:215px;font-size:12px;color:#000">-20.0</div>
<div style="left:1295px;top:247px;width:4px;height:1px;background:#000"></div>
<div class="t" style="left:1300px;top:242px;font-size:12px;color:#000">-30.0</div>
<div style="left:1295px;top:273px;width:4px;height:1px;background:#000"></div>
<div class="t" style="left:1300px;top:268px;font-size:12px;color:#000">-40.0</div>
<div style="left:1295px;top:300px;width:4px;height:1px;background:#000"></div>
<div class="t" style="left:1300px;top:295px;font-size:12px;color:#000">-50.0</div>
<div style="left:1295px;top:327px;width:4px;height:1px;background:#000"></div>
<div class="t" style="left:1300px;top:322px;font-size:12px;color:#000">-60.0</div>
<div style="left:1295px;top:354px;width:4px;height:1px;background:#000"></div>
<div class="t" style="left:1300px;top:349px;font-size:12px;color:#000">-70.0</div>
<div style="left:1295px;top:380px;width:4px;height:1px;background:#000"></div>
<div class="t" style="left:1300px;top:375px;font-size:12px;color:#000">-80.0</div>
<div style="left:1295px;top:407px;width:4px;height:1px;background:#000"></div>
<div class="t" style="left:1300px;top:402px;font-size:12px;color:#000">-90.0</div>
<div style="left:1295px;top:434px;width:4px;height:1px;background:#000"></div>
<div class="t" style="left:1300px;top:429px;font-size:12px;color:#000">-100.0</div>
<div style="left:1295px;top:461px;width:4px;height:1px;background:#000"></div>
<div class="t" style="left:1300px;top:456px;font-size:12px;color:#000">-110.0</div>
<div style="left:1295px;top:487px;width:4px;height:1px;background:#000"></div>
<div class="t" style="left:1300px;top:482px;font-size:12px;color:#000">-120.0</div>
<div style="left:1275px;top:506px;width:20px;height:2px;background:#A8A498"></div>
<div style="left:1275px;top:508px;width:20px;height:320px;background:#505050"></div>
<div style="left:1277px;top:521px;width:16px;height:305px;background:#FCEC94"></div>
<div style="left:1295px;top:507px;width:4px;height:1px;background:#000"></div>
<div class="t" style="left:1300px;top:502px;font-size:12px;color:#000">0.0</div>
<div style="left:1295px;top:533px;width:4px;height:1px;background:#000"></div>
<div class="t" style="left:1300px;top:528px;font-size:12px;color:#000">-10.0</div>
<div style="left:1295px;top:560px;width:4px;height:1px;background:#000"></div>
<div class="t" style="left:1300px;top:555px;font-size:12px;color:#000">-20.0</div>
<div style="left:1295px;top:587px;width:4px;height:1px;background:#000"></div>
<div class="t" style="left:1300px;top:582px;font-size:12px;color:#000">-30.0</div>
<div style="left:1295px;top:613px;width:4px;height:1px;background:#000"></div>
<div class="t" style="left:1300px;top:608px;font-size:12px;color:#000">-40.0</div>
<div style="left:1295px;top:640px;width:4px;height:1px;background:#000"></div>
<div class="t" style="left:1300px;top:635px;font-size:12px;color:#000">-50.0</div>
<div style="left:1295px;top:667px;width:4px;height:1px;background:#000"></div>
<div class="t" style="left:1300px;top:662px;font-size:12px;color:#000">-60.0</div>
<div style="left:1295px;top:694px;width:4px;height:1px;background:#000"></div>
<div class="t" style="left:1300px;top:689px;font-size:12px;color:#000">-70.0</div>
<div style="left:1295px;top:720px;width:4px;height:1px;background:#000"></div>
<div class="t" style="left:1300px;top:715px;font-size:12px;color:#000">-80.0</div>
<div style="left:1295px;top:747px;width:4px;height:1px;background:#000"></div>
<div class="t" style="left:1300px;top:742px;font-size:12px;color:#000">-90.0</div>
<div style="left:1295px;top:774px;width:4px;height:1px;background:#000"></div>
<div class="t" style="left:1300px;top:769px;font-size:12px;color:#000">-100.0</div>
<div style="left:1295px;top:801px;width:4px;height:1px;background:#000"></div>
<div class="t" style="left:1300px;top:796px;font-size:12px;color:#000">-110.0</div>
<div style="left:1295px;top:827px;width:4px;height:1px;background:#000"></div>
<div class="t" style="left:1300px;top:822px;font-size:12px;color:#000">-120.0</div>
<div class="t" style="left:1275px;top:849px;font-size:12px;color:#000">Pwr</div>
<div class="t" style="left:1369px;top:155px;font-size:12px;color:#000"><u>Overlays</u></div>
<div class="t" style="left:1333px;top:170px;width:34px;text-align:center;font-size:12px;color:#000;transform:rotate(-90deg);transform-origin:17px 6px">Set</div>
<div style="left:1342px;top:189px;width:14px;height:14px;background:#ECE9D8;box-shadow:inset 1px 1px 0 #fff,inset -2px -2px 0 #A7A392"></div>
<div class="t" style="left:1342px;width:12px;text-align:center;top:190px;font-size:12px;color:#000">1</div>
<div style="left:1359px;top:190px;width:14px;height:13px;background:#fff;border-top:2px solid #A7A392;border-left:2px solid #A7A392;border-right:1px solid #F4F2EA;border-bottom:1px solid #F4F2EA"></div>
<div class="t" style="left:1376px;top:190px;font-size:12px;color:#1E8A1E">Overlay 1</div>
<div style="left:1342px;top:205px;width:14px;height:14px;background:#ECE9D8;box-shadow:inset 1px 1px 0 #fff,inset -2px -2px 0 #A7A392"></div>
<div class="t" style="left:1342px;width:12px;text-align:center;top:206px;font-size:12px;color:#000">2</div>
<div style="left:1359px;top:206px;width:14px;height:13px;background:#fff;border-top:2px solid #A7A392;border-left:2px solid #A7A392;border-right:1px solid #F4F2EA;border-bottom:1px solid #F4F2EA"></div>
<div class="t" style="left:1376px;top:206px;font-size:12px;color:#20B0B0">Overlay 2</div>
<div style="left:1342px;top:221px;width:14px;height:14px;background:#ECE9D8;box-shadow:inset 1px 1px 0 #fff,inset -2px -2px 0 #A7A392"></div>
<div class="t" style="left:1342px;width:12px;text-align:center;top:222px;font-size:12px;color:#000">3</div>
<div style="left:1359px;top:222px;width:14px;height:13px;background:#fff;border-top:2px solid #A7A392;border-left:2px solid #A7A392;border-right:1px solid #F4F2EA;border-bottom:1px solid #F4F2EA"></div>
<div class="t" style="left:1376px;top:222px;font-size:12px;color:#8A1E8A">Overlay 3</div>
<div style="left:1342px;top:237px;width:14px;height:14px;background:#ECE9D8;box-shadow:inset 1px 1px 0 #fff,inset -2px -2px 0 #A7A392"></div>
<div class="t" style="left:1342px;width:12px;text-align:center;top:238px;font-size:12px;color:#000">4</div>
<div style="left:1359px;top:238px;width:14px;height:13px;background:#fff;border-top:2px solid #A7A392;border-left:2px solid #A7A392;border-right:1px solid #F4F2EA;border-bottom:1px solid #F4F2EA"></div>
<div class="t" style="left:1376px;top:238px;font-size:12px;color:#E020E0">Overlay 4</div>
<div style="left:1342px;top:253px;width:14px;height:14px;background:#ECE9D8;box-shadow:inset 1px 1px 0 #fff,inset -2px -2px 0 #A7A392"></div>
<div class="t" style="left:1342px;width:12px;text-align:center;top:254px;font-size:12px;color:#000">5</div>
<div style="left:1359px;top:254px;width:14px;height:13px;background:#fff;border-top:2px solid #A7A392;border-left:2px solid #A7A392;border-right:1px solid #F4F2EA;border-bottom:1px solid #F4F2EA"></div>
<div class="t" style="left:1376px;top:254px;font-size:12px;color:#8A5A28">Overlay 5</div>
<div style="left:1342px;top:269px;width:14px;height:14px;background:#ECE9D8;box-shadow:inset 1px 1px 0 #fff,inset -2px -2px 0 #A7A392"></div>
<div class="t" style="left:1342px;width:12px;text-align:center;top:270px;font-size:12px;color:#000">6</div>
<div style="left:1359px;top:270px;width:14px;height:13px;background:#fff;border-top:2px solid #A7A392;border-left:2px solid #A7A392;border-right:1px solid #F4F2EA;border-bottom:1px solid #F4F2EA"></div>
<div class="t" style="left:1376px;top:270px;font-size:12px;color:#F0946A">Overlay 6</div>
<div style="left:1342px;top:285px;width:14px;height:14px;background:#ECE9D8;box-shadow:inset 1px 1px 0 #fff,inset -2px -2px 0 #A7A392"></div>
<div class="t" style="left:1342px;width:12px;text-align:center;top:286px;font-size:12px;color:#000">C</div>
<div style="left:1359px;top:286px;width:14px;height:13px;background:#fff;border-top:2px solid #A7A392;border-left:2px solid #A7A392;border-right:1px solid #F4F2EA;border-bottom:1px solid #F4F2EA"></div>
<div class="t" style="left:1376px;top:286px;font-size:12px;color:#000">Composite</div>
<div style="left:1339px;top:302px;width:64px;height:17px;background:#ECE9D8;box-shadow:inset 1px 1px 0 #fff,inset -2px -2px 0 #8E8B7C"></div>
<div class="t" style="left:1345px;top:305px;font-size:12px;color:#000">Options...</div>
<div class="t" style="left:1348px;top:172px;width:34px;text-align:center;font-size:12px;color:#000;transform:rotate(-90deg);transform-origin:17px 6px">On</div>
<div class="t" style="left:1333px;top:510px;width:34px;text-align:center;font-size:12px;color:#000;transform:rotate(-90deg);transform-origin:17px 6px">Set</div>
<div style="left:1342px;top:529px;width:14px;height:14px;background:#ECE9D8;box-shadow:inset 1px 1px 0 #fff,inset -2px -2px 0 #A7A392"></div>
<div class="t" style="left:1342px;width:12px;text-align:center;top:530px;font-size:12px;color:#000">1</div>
<div style="left:1359px;top:530px;width:14px;height:13px;background:#fff;border-top:2px solid #A7A392;border-left:2px solid #A7A392;border-right:1px solid #F4F2EA;border-bottom:1px solid #F4F2EA"></div>
<div class="t" style="left:1376px;top:530px;font-size:12px;color:#1E8A1E">Overlay 1</div>
<div style="left:1342px;top:545px;width:14px;height:14px;background:#ECE9D8;box-shadow:inset 1px 1px 0 #fff,inset -2px -2px 0 #A7A392"></div>
<div class="t" style="left:1342px;width:12px;text-align:center;top:546px;font-size:12px;color:#000">2</div>
<div style="left:1359px;top:546px;width:14px;height:13px;background:#fff;border-top:2px solid #A7A392;border-left:2px solid #A7A392;border-right:1px solid #F4F2EA;border-bottom:1px solid #F4F2EA"></div>
<div class="t" style="left:1376px;top:546px;font-size:12px;color:#20B0B0">Overlay 2</div>
<div style="left:1342px;top:561px;width:14px;height:14px;background:#ECE9D8;box-shadow:inset 1px 1px 0 #fff,inset -2px -2px 0 #A7A392"></div>
<div class="t" style="left:1342px;width:12px;text-align:center;top:562px;font-size:12px;color:#000">3</div>
<div style="left:1359px;top:562px;width:14px;height:13px;background:#fff;border-top:2px solid #A7A392;border-left:2px solid #A7A392;border-right:1px solid #F4F2EA;border-bottom:1px solid #F4F2EA"></div>
<div class="t" style="left:1376px;top:562px;font-size:12px;color:#8A1E8A">Overlay 3</div>
<div style="left:1342px;top:577px;width:14px;height:14px;background:#ECE9D8;box-shadow:inset 1px 1px 0 #fff,inset -2px -2px 0 #A7A392"></div>
<div class="t" style="left:1342px;width:12px;text-align:center;top:578px;font-size:12px;color:#000">4</div>
<div style="left:1359px;top:578px;width:14px;height:13px;background:#fff;border-top:2px solid #A7A392;border-left:2px solid #A7A392;border-right:1px solid #F4F2EA;border-bottom:1px solid #F4F2EA"></div>
<div class="t" style="left:1376px;top:578px;font-size:12px;color:#E020E0">Overlay 4</div>
<div style="left:1342px;top:593px;width:14px;height:14px;background:#ECE9D8;box-shadow:inset 1px 1px 0 #fff,inset -2px -2px 0 #A7A392"></div>
<div class="t" style="left:1342px;width:12px;text-align:center;top:594px;font-size:12px;color:#000">5</div>
<div style="left:1359px;top:594px;width:14px;height:13px;background:#fff;border-top:2px solid #A7A392;border-left:2px solid #A7A392;border-right:1px solid #F4F2EA;border-bottom:1px solid #F4F2EA"></div>
<div class="t" style="left:1376px;top:594px;font-size:12px;color:#8A5A28">Overlay 5</div>
<div style="left:1342px;top:609px;width:14px;height:14px;background:#ECE9D8;box-shadow:inset 1px 1px 0 #fff,inset -2px -2px 0 #A7A392"></div>
<div class="t" style="left:1342px;width:12px;text-align:center;top:610px;font-size:12px;color:#000">6</div>
<div style="left:1359px;top:610px;width:14px;height:13px;background:#fff;border-top:2px solid #A7A392;border-left:2px solid #A7A392;border-right:1px solid #F4F2EA;border-bottom:1px solid #F4F2EA"></div>
<div class="t" style="left:1376px;top:610px;font-size:12px;color:#F0946A">Overlay 6</div>
<div style="left:1342px;top:625px;width:14px;height:14px;background:#ECE9D8;box-shadow:inset 1px 1px 0 #fff,inset -2px -2px 0 #A7A392"></div>
<div class="t" style="left:1342px;width:12px;text-align:center;top:626px;font-size:12px;color:#000">C</div>
<div style="left:1359px;top:626px;width:14px;height:13px;background:#fff;border-top:2px solid #A7A392;border-left:2px solid #A7A392;border-right:1px solid #F4F2EA;border-bottom:1px solid #F4F2EA"></div>
<div class="t" style="left:1376px;top:626px;font-size:12px;color:#000">Composite</div>
<div style="left:1339px;top:642px;width:64px;height:17px;background:#ECE9D8;box-shadow:inset 1px 1px 0 #fff,inset -2px -2px 0 #8E8B7C"></div>
<div class="t" style="left:1345px;top:645px;font-size:12px;color:#000">Options...</div>
<div class="t" style="left:1348px;top:512px;width:34px;text-align:center;font-size:12px;color:#000;transform:rotate(-90deg);transform-origin:17px 6px">On</div>
<svg style="left:0;top:0" width="1440" height="900"><defs><clipPath id="c168"><rect x="65" y="168" width="1200" height="320"/></clipPath></defs><path d="M64.2 400.4 L69.2 393.2 L75.7 389.6 L80.8 382.4 L85.1 380.2 L90.2 394.7 L95.2 400.4 L103.2 422.1 L108.2 404.8 L111.8 403.3 L116.2 403.3 L120.5 443.8 L124.1 409.8 L131.3 393.9 L140.0 419.2 L142.1 396.1 L145.8 394.7 L150.1 401.2 L154.4 394.7 L159.5 382.4 L164.5 388.9 L168.9 399.0 L171.3 416.3 L173.9 399.7 L180.4 391.8 L187.6 406.2 L195.6 380.9 L198.5 387.4 L200.6 417.8 L205.0 403.3 L208.6 432.2 L211.5 425.0 L215.8 446.6 L219.4 425.7 L226.6 485.6 L230.2 406.2 L233.1 423.5 L238.2 397.5 L242.5 420.6 L246.1 422.1 L251.2 443.8 L257.7 402.6 L262.0 419.2 L264.0 407.9 L265.3 451.0 L266.5 405.9 L267.9 407.5 L269.7 402.1 L270.9 412.0 L272.6 420.2 L273.9 416.4 L275.6 397.0 L277.3 437.4 L278.9 449.5 L280.5 425.7 L281.9 410.9 L283.4 423.5 L284.8 409.0 L286.3 412.2 L287.9 401.8 L289.0 413.3 L290.4 403.1 L291.9 422.5 L293.4 424.4 L294.7 407.0 L296.0 431.9 L297.3 445.1 L298.4 421.6 L299.7 408.3 L301.0 399.4 L302.2 406.2 L303.5 418.6 L304.6 404.8 L305.7 411.6 L307.3 413.0 L308.5 408.7 L310.1 401.0 L311.3 404.1 L312.3 409.7 L313.3 424.1 L314.4 411.8 L315.7 421.4 L316.8 417.0 L318.1 410.4 L319.5 422.2 L320.6 420.3 L322.1 428.8 L323.0 406.7 L324.1 408.1 L325.6 398.6 L326.7 407.5 L327.6 412.0 L328.6 423.9 L329.5 436.8 L330.6 417.2 L331.5 408.9 L332.7 416.0 L333.6 403.5 L334.8 415.4 L336.2 421.9 L337.5 417.4 L338.8 407.5 L339.9 414.1 L341.1 422.9 L342.3 413.2 L343.5 408.8 L344.7 407.5 L345.7 416.9 L346.9 414.3 L348.1 406.1 L349.0 401.0 L350.1 409.9 L351.3 411.3 L352.5 420.5 L353.5 440.0 L354.8 410.7 L355.7 402.4 L356.7 412.4 L358.2 406.0 L359.3 423.4 L360.4 411.2 L361.5 406.8 L362.8 421.9 L364.0 419.2 L365.2 411.4 L366.6 402.5 L367.6 415.1 L368.5 433.0 L369.5 417.0 L370.9 434.2 L372.2 426.2 L373.2 411.6 L374.5 402.3 L375.9 432.4 L377.1 422.6 L378.3 434.0 L379.3 430.1 L380.3 410.8 L381.6 415.6 L382.7 402.4 L383.8 417.0 L384.9 407.5 L385.9 407.3 L387.0 412.7 L388.3 435.5 L389.2 411.1 L390.2 407.9 L391.4 413.4 L392.8 410.3 L394.1 402.8 L395.4 405.7 L396.6 413.2 L397.7 427.9 L398.7 426.1 L399.5 421.5 L400.5 436.6 L401.4 433.1 L402.6 414.2 L403.5 408.2 L404.7 421.5 L405.8 402.2 L407.2 405.8 L408.2 397.1 L409.3 416.5 L410.2 427.7 L411.4 412.9 L412.3 407.8 L413.6 432.7 L414.7 417.8 L415.7 407.8 L417.1 423.8 L418.4 421.5 L419.5 410.3 L420.5 415.4 L421.4 418.5 L422.5 452.4 L423.7 425.3 L424.7 418.5 L426.0 420.1 L427.0 407.2 L428.2 408.9 L429.4 431.9 L430.4 436.4 L431.6 410.5 L432.7 447.6 L434.0 414.6 L435.0 410.7 L436.3 406.2 L437.7 412.6 L438.9 398.5 L439.8 400.3 L440.8 411.4 L441.9 415.4 L443.2 413.7 L444.5 397.5 L445.8 419.0 L447.1 426.0 L448.1 399.7 L449.3 407.0 L450.1 423.9 L451.3 427.0 L452.3 412.4 L453.7 411.7 L454.9 408.0 L456.2 404.8 L457.5 412.8 L458.6 436.3 L459.7 410.8 L460.6 415.1 L461.8 413.9 L462.8 434.2 L464.1 418.6 L465.3 404.0 L466.4 400.4 L467.4 433.5 L468.4 414.5 L469.4 414.1 L470.4 420.2 L471.7 418.9 L473.1 424.4 L473.9 431.1 L475.2 410.9 L476.3 432.1 L477.3 427.0 L478.3 411.5 L479.3 402.2 L480.2 397.5 L481.0 410.0 L481.9 420.1 L483.0 425.3 L484.1 409.2 L485.0 412.0 L486.3 413.5 L487.4 401.3 L488.6 420.8 L489.8 423.1 L490.9 440.0 L492.3 426.5 L493.3 415.0 L494.7 410.2 L495.6 416.4 L496.7 418.3 L497.6 418.4 L498.9 431.0 L500.2 435.2 L501.1 412.7 L502.4 421.8 L503.3 435.6 L504.3 418.8 L505.6 412.9 L506.4 411.3 L507.7 399.7 L508.7 399.1 L509.7 417.5 L510.7 410.0 L511.9 399.4 L513.1 410.5 L514.1 410.9 L515.1 419.7 L516.4 398.9 L517.3 397.3 L518.1 409.1 L519.3 432.5 L520.2 405.5 L521.1 415.6 L522.2 399.6 L523.2 428.6 L524.5 396.1 L525.4 401.3 L526.4 403.4 L527.3 409.2 L528.2 409.3 L529.2 422.2 L530.4 403.8 L531.4 409.2 L532.6 404.8 L533.4 409.8 L534.7 415.9 L535.7 405.4 L536.9 407.8 L538.3 408.8 L539.4 410.8 L540.4 413.6 L541.5 408.8 L542.7 403.1 L543.8 408.7 L545.0 401.8 L546.2 404.9 L547.5 404.3 L548.5 404.6 L549.4 400.7 L550.5 414.3 L551.5 405.6 L552.6 400.3 L553.9 397.3 L555.1 396.9 L556.4 410.5 L557.8 393.4 L559.0 405.0 L560.3 416.2 L561.8 417.2 L562.9 408.1 L563.9 406.6 L565.0 400.5 L566.0 416.3 L567.0 409.4 L568.2 409.8 L569.2 422.6 L570.2 414.6 L571.5 405.3 L572.5 403.0 L573.9 396.5 L575.2 412.1 L576.1 408.1 L577.0 411.8 L578.4 399.2 L579.7 398.2 L580.9 399.5 L582.1 410.4 L583.4 407.7 L584.9 408.3 L585.9 399.8 L586.8 413.8 L588.0 407.2 L589.0 396.5 L590.5 404.4 L591.8 412.1 L592.9 412.2 L594.2 405.8 L595.6 395.0 L596.6 394.0 L597.7 402.6 L598.9 421.5 L600.2 393.0 L601.5 402.5 L603.0 410.4 L604.4 396.7 L605.6 384.0 L606.6 390.0 L607.7 401.4 L609.0 397.1 L610.4 394.9 L611.5 408.0 L612.9 407.8 L614.2 387.5 L615.5 385.5 L616.7 418.0 L617.8 393.8 L619.1 392.8 L620.4 394.9 L621.8 394.5 L623.1 392.5 L624.3 380.8 L625.6 393.3 L626.9 390.3 L628.2 389.4 L629.4 378.0 L630.5 388.0 L631.6 390.3 L632.9 399.1 L634.1 383.0 L635.6 406.9 L636.8 390.9 L638.3 371.3 L639.7 367.4 L641.0 387.9 L642.0 385.3 L643.4 380.0 L644.7 376.3 L646.2 371.2 L647.5 379.1 L648.7 391.1 L650.0 385.7 L651.0 387.0 L652.4 392.0 L653.7 382.1 L654.9 405.8 L656.3 390.2 L657.4 368.5 L658.6 390.1 L659.8 378.8 L661.1 374.8 L662.5 377.4 L663.7 371.6 L664.7 367.3 L665.7 368.2 L667.1 363.3 L668.0 359.3 L669.2 364.9 L670.5 360.9 L671.6 365.7 L672.8 365.7 L674.3 364.5 L675.7 376.5 L677.0 353.4 L678.4 357.7 L679.8 348.4 L681.0 354.1 L682.1 362.9 L683.6 357.0 L684.7 349.7 L686.0 357.6 L687.2 378.6 L688.8 361.3 L689.8 354.7 L691.0 366.9 L692.2 358.4 L693.5 347.5 L694.7 353.3 L696.2 360.3 L697.5 348.0 L698.6 352.6 L699.6 354.1 L700.7 347.6 L702.2 361.0 L703.2 350.5 L704.7 354.9 L706.2 347.4 L707.5 354.5 L708.8 352.6 L709.0 345.0 L710.5 332.0 L712.2 303.0 L713.0 330.0 L713.8 333.0 L715.0 361.0 L717.3 270.0 L719.2 182.8 L720.1 216.7 L720.8 208.5 L721.5 258.7 L723.2 291.3 L724.3 342.7 L726.7 306.5 L729.0 349.7 L731.0 340.0 L732.0 350.6 L733.3 344.0 L735.0 374.1 L736.3 355.5 L737.3 349.5 L738.6 357.6 L740.0 355.4 L741.1 348.7 L742.5 350.4 L743.6 355.5 L744.8 360.8 L746.3 356.8 L747.5 358.9 L749.1 346.1 L750.7 360.4 L752.1 355.6 L753.4 362.2 L754.6 354.5 L756.2 371.0 L757.3 361.1 L758.7 366.2 L759.7 372.7 L760.9 377.2 L762.4 368.3 L763.5 372.7 L764.6 373.9 L766.3 373.0 L767.5 364.5 L768.8 389.4 L769.9 399.3 L771.4 380.0 L772.5 382.8 L773.9 382.9 L775.2 379.4 L776.4 372.2 L777.8 369.8 L779.0 379.7 L780.1 379.9 L781.8 383.8 L783.0 384.1 L784.4 386.7 L785.7 399.7 L787.3 395.2 L788.7 382.2 L790.4 390.3 L792.0 387.3 L793.6 389.3 L795.2 397.5 L796.6 398.2 L798.3 394.0 L800.0 390.7 L801.6 388.3 L802.7 393.4 L804.2 393.8 L805.5 422.1 L807.0 403.9 L808.2 413.8 L809.5 402.8 L811.0 400.7 L812.4 409.3 L813.8 406.4 L815.0 412.6 L816.4 402.5 L817.6 409.5 L819.2 406.2 L820.9 413.9 L822.1 405.8 L823.3 405.1 L824.8 404.7 L826.2 399.4 L827.4 403.4 L828.9 402.6 L830.4 419.5 L831.8 426.3 L832.9 402.1 L834.2 398.2 L835.8 407.6 L836.9 416.0 L838.6 393.9 L839.1 366.5 L839.4 360.3 L840.0 370.6 L840.3 396.5 L841.9 415.0 L842.4 417.9 L844.2 421.4 L845.4 417.8 L846.9 435.3 L848.4 425.2 L850.1 431.4 L851.5 420.0 L852.9 426.6 L854.7 423.5 L856.4 425.8 L857.6 417.2 L859.2 422.1 L860.7 413.2 L862.2 424.5 L863.9 417.5 L865.0 422.5 L866.6 414.6 L867.8 421.2 L869.3 417.9 L870.9 421.4 L872.3 416.2 L873.8 420.6 L874.9 415.2 L876.6 423.0 L878.1 414.2 L879.5 429.6 L880.6 416.4 L881.7 427.1 L882.8 419.8 L884.0 427.4 L885.3 419.9 L886.6 425.8 L887.8 418.5 L889.1 428.8 L890.7 419.9 L892.1 427.2 L893.3 425.0 L894.8 424.8 L896.3 416.5 L897.8 427.0 L898.9 415.0 L900.2 424.9 L902.0 419.2 L903.1 428.4 L904.6 421.1 L906.2 428.9 L907.5 426.0 L909.4 382.4 L910.0 322.4 L910.3 308.8 L910.9 331.4 L911.4 388.0 L913.1 425.0 L914.8 432.8 L916.3 427.9 L917.7 432.6 L919.1 426.4 L920.7 431.8 L922.3 422.6 L923.7 435.8 L925.0 433.0 L926.4 430.8 L927.6 423.9 L928.8 438.6 L929.9 423.4 L931.5 437.5 L932.7 430.6 L934.0 428.5 L935.7 423.8 L936.9 430.9 L938.3 424.0 L939.7 429.3 L941.0 422.2 L942.5 431.0 L943.8 425.5 L945.1 434.9 L946.3 424.7 L948.1 435.8 L949.8 426.1 L951.5 436.4 L953.0 430.0 L954.3 435.4 L956.0 428.1 L957.2 434.1 L958.4 434.0 L959.9 422.3 L960.1 410.6 L960.4 408.0 L961.0 412.4 L961.0 423.4 L962.4 433.0 L962.7 434.4 L964.3 425.4 L965.8 432.0 L967.4 424.5 L968.6 432.6 L970.1 424.8 L971.2 430.3 L972.6 423.7 L973.8 433.0 L975.3 423.2 L976.9 435.0 L978.2 423.5 L979.3 432.1 L980.6 423.2 L982.4 430.6 L984.2 428.2 L985.4 430.8 L986.8 423.8 L987.9 431.4 L989.6 425.6 L991.0 430.1 L992.2 429.9 L993.6 432.8 L995.1 424.1 L996.2 432.0 L997.8 410.6 L998.1 384.2 L998.4 378.2 L999.0 388.2 L999.1 413.1 L1000.6 431.0 L1002.3 431.9 L1003.7 426.6 L1005.1 433.1 L1006.9 427.6 L1008.5 434.6 L1009.8 426.5 L1011.4 433.2 L1013.0 426.0 L1014.3 434.5 L1015.6 426.5 L1016.8 433.9 L1018.1 425.9 L1019.4 430.7 L1020.7 431.6 L1022.3 432.0 L1023.4 424.3 L1025.1 431.1 L1026.3 426.6 L1027.5 429.7 L1028.4 432.0 L1029.9 419.6 L1030.1 406.9 L1030.4 404.0 L1031.0 408.8 L1031.0 420.8 L1032.4 431.0 L1033.1 426.6 L1034.5 419.7 L1035.8 433.1 L1037.0 421.9 L1038.5 428.0 L1039.9 419.8 L1041.1 435.8 L1042.8 422.0 L1044.1 429.9 L1045.2 421.7 L1046.7 427.9 L1048.3 420.6 L1049.6 428.9 L1051.1 421.7 L1052.3 427.5 L1053.4 420.2 L1054.9 427.1 L1056.0 420.6 L1057.1 426.7 L1058.5 420.0 L1059.7 429.1 L1061.5 417.3 L1062.7 427.0 L1063.9 417.7 L1065.2 426.8 L1066.9 420.1 L1068.2 425.3 L1069.6 424.8 L1070.9 427.3 L1072.2 425.3 L1073.3 428.6 L1074.4 420.7 L1075.8 430.7 L1077.5 422.9 L1078.6 431.0 L1080.0 421.2 L1080.1 412.3 L1080.4 410.3 L1080.9 422.0 L1081.0 413.6 L1082.2 430.0 L1083.3 423.0 L1085.1 428.8 L1086.7 422.5 L1087.9 431.6 L1089.2 417.8 L1090.6 427.5 L1092.0 418.8 L1093.8 427.8 L1095.3 418.2 L1096.6 425.3 L1098.3 420.4 L1098.6 429.0 L1100.0 419.1 L1100.1 410.0 L1100.4 408.0 L1100.9 419.9 L1101.0 411.4 L1102.2 428.0 L1103.0 428.7 L1104.2 421.2 L1106.0 429.1 L1107.5 418.6 L1108.6 428.2 L1110.4 418.2 L1111.8 424.8 L1113.5 419.3 L1115.0 423.7 L1116.3 417.8 L1117.9 426.6 L1119.4 421.9 L1120.6 425.8 L1122.3 414.2 L1123.4 423.5 L1124.7 413.1 L1126.3 423.0 L1128.0 415.5 L1129.9 420.5 L1131.2 415.1 L1132.9 423.9 L1134.2 415.2 L1135.6 421.9 L1137.0 413.9 L1138.5 425.1 L1140.2 413.1 L1141.7 423.0 L1143.2 411.9 L1144.8 419.7 L1146.1 410.2 L1147.9 423.9 L1149.1 408.0 L1150.6 424.5 L1152.3 413.8 L1153.4 418.3 L1155.1 409.4 L1156.5 416.1 L1157.8 409.9 L1159.7 419.8 L1160.9 409.7 L1162.2 417.1 L1163.7 410.7 L1165.4 420.4 L1167.2 408.1 L1168.9 414.9 L1170.7 409.6 L1172.5 420.6 L1173.8 408.1 L1175.4 414.4 L1176.8 409.7 L1178.2 415.6 L1179.9 410.0 L1181.3 423.8 L1182.8 412.1 L1184.5 420.4 L1186.3 412.1 L1188.0 417.5 L1189.3 408.8 L1191.0 415.6 L1192.1 407.1 L1193.9 416.2 L1195.3 405.1 L1196.6 414.9 L1198.4 405.5 L1200.0 412.0 L1201.2 405.2 L1202.8 410.7 L1204.5 402.7 L1205.7 408.2 L1207.4 399.8 L1208.7 409.2 L1209.9 400.7 L1211.4 406.0 L1213.3 400.6 L1215.0 409.8 L1216.3 397.6 L1217.8 408.6 L1219.5 400.6 L1220.8 407.4 L1222.3 401.7 L1224.0 407.1 L1225.8 399.2 L1227.3 407.8 L1228.9 400.0 L1230.3 410.7 L1231.9 401.2 L1233.2 410.1 L1234.5 402.9 L1236.2 409.3 L1237.5 401.4 L1239.1 408.1 L1240.5 399.9 L1242.4 405.0 L1243.8 394.4 L1245.6 402.1 L1247.0 396.0 L1248.6 402.1 L1250.2 394.3 L1251.8 403.6 L1253.1 397.4 L1254.3 404.4 L1255.5 400.6 L1257.0 407.5 L1258.4 402.0 L1260.0 409.4 L1261.5 401.1 L1263.2 408.3 L1264.6 400.4" fill="none" stroke="#F8F4B0" stroke-width="1" shape-rendering="crispEdges" clip-path="url(#c168)"/></svg>
<svg style="left:0;top:0" width="1440" height="900"><defs><clipPath id="c508"><rect x="65" y="508" width="1200" height="320"/></clipPath></defs><path d="M64.3 742.1 L70.6 746.0 L75.2 729.7 L80.7 738.2 L85.3 809.8 L90.0 758.4 L95.4 747.5 L100.1 742.9 L103.2 729.7 L108.7 727.3 L112.5 749.1 L120.3 774.0 L124.2 749.9 L128.9 753.8 L132.0 752.2 L135.9 740.5 L141.3 741.3 L146.0 738.2 L152.2 723.4 L156.9 723.4 L164.6 741.3 L174.0 793.4 L180.2 749.9 L181.8 760.0 L186.4 750.7 L193.4 710.2 L197.3 746.8 L198.9 777.1 L200.4 737.4 L205.9 783.3 L211.3 731.2 L216.0 736.7 L217.5 732.8 L223.7 773.2 L228.4 728.9 L232.3 726.5 L239.3 741.3 L240.8 759.2 L244.0 741.3 L246.3 765.4 L248.6 738.2 L251.0 739.0 L254.8 756.9 L259.5 774.0 L261.8 739.8 L264.0 785.7 L265.5 750.4 L267.0 749.1 L268.8 762.2 L270.3 743.5 L271.9 738.6 L273.7 766.0 L274.8 756.9 L276.0 755.2 L277.7 750.2 L279.2 753.6 L281.0 751.5 L282.7 735.7 L284.3 753.7 L285.6 736.9 L286.8 763.2 L288.2 752.7 L289.3 748.6 L290.8 751.2 L292.0 759.4 L293.2 738.4 L294.8 764.5 L295.8 741.7 L296.9 771.3 L298.3 754.5 L299.7 742.1 L300.7 742.8 L302.1 766.2 L303.6 752.4 L304.7 744.5 L306.2 754.3 L307.6 750.1 L309.0 766.9 L310.5 752.0 L312.8 732.1 L313.7 708.0 L314.0 702.6 L314.6 711.7 L315.5 734.4 L317.5 751.0 L319.0 769.9 L320.2 779.1 L321.4 748.2 L322.6 744.3 L323.9 764.6 L325.3 746.9 L326.6 748.9 L328.0 767.3 L329.5 751.1 L330.5 746.3 L331.5 792.8 L332.6 762.3 L334.0 761.2 L335.4 756.3 L336.6 748.3 L337.9 735.6 L339.2 745.1 L340.5 777.8 L341.5 779.7 L342.8 760.5 L344.0 747.1 L345.3 745.3 L346.5 745.0 L347.8 751.4 L349.1 740.5 L350.5 747.6 L351.7 771.5 L353.0 764.5 L354.1 746.1 L354.9 755.6 L356.3 764.5 L357.2 776.5 L358.1 754.8 L359.2 746.5 L360.3 749.0 L361.6 770.4 L362.6 772.2 L363.8 755.3 L365.0 804.2 L365.8 762.7 L367.1 737.4 L368.5 741.8 L369.8 746.5 L370.8 744.1 L371.7 740.6 L373.1 764.2 L374.2 775.6 L375.2 760.1 L376.0 744.4 L377.3 737.1 L378.7 743.1 L380.1 733.7 L381.0 750.6 L382.1 738.8 L383.1 742.2 L384.2 778.2 L385.6 762.5 L386.8 760.7 L388.0 741.2 L388.8 744.0 L390.0 766.0 L391.2 765.2 L392.2 761.9 L393.5 768.5 L394.6 751.6 L395.9 749.8 L396.8 771.9 L397.7 763.0 L399.1 746.7 L400.4 757.9 L401.6 770.0 L402.5 746.9 L403.8 748.0 L405.0 742.6 L406.0 790.7 L407.3 767.8 L408.6 754.1 L409.7 734.6 L410.9 755.7 L411.9 747.4 L413.2 744.9 L414.4 757.8 L415.8 757.3 L416.8 746.1 L418.0 750.6 L419.2 751.9 L420.3 777.1 L421.3 758.9 L422.4 760.1 L423.3 796.1 L424.3 738.4 L425.2 762.5 L426.1 737.8 L427.2 751.3 L428.2 773.9 L429.3 759.3 L430.3 750.8 L431.7 761.5 L432.8 761.3 L433.8 733.0 L434.8 738.2 L436.2 766.6 L437.5 769.6 L438.4 776.4 L439.6 745.9 L440.6 787.6 L441.7 765.3 L442.9 753.1 L444.3 741.5 L445.5 750.6 L446.5 749.0 L447.5 754.5 L448.7 751.5 L450.0 747.8 L450.9 742.1 L452.3 739.4 L453.4 742.6 L454.5 778.1 L455.6 764.2 L456.8 746.2 L457.8 750.8 L458.7 743.6 L459.6 756.4 L460.9 774.2 L462.1 752.2 L463.1 754.1 L464.3 784.6 L465.3 747.2 L466.5 754.7 L467.7 749.2 L468.6 763.0 L469.8 753.3 L470.7 755.7 L471.8 753.4 L472.8 737.3 L474.0 748.6 L474.9 751.0 L476.0 756.2 L476.8 752.9 L477.9 750.1 L478.9 745.0 L480.1 769.3 L481.2 752.4 L482.1 764.9 L483.0 761.0 L483.8 743.8 L484.7 741.1 L486.0 738.3 L487.2 747.1 L488.6 746.8 L489.7 747.3 L490.8 753.1 L491.7 740.8 L492.7 736.3 L493.9 763.7 L495.1 750.9 L496.3 743.5 L497.4 740.3 L498.3 733.6 L499.7 746.4 L500.8 767.0 L502.1 749.7 L503.1 754.2 L504.2 745.2 L505.1 747.3 L506.0 740.1 L506.9 759.8 L508.0 747.5 L509.2 746.7 L510.6 741.4 L511.8 732.1 L513.1 744.7 L514.4 748.8 L515.5 749.9 L516.6 765.3 L517.6 734.6 L519.0 740.6 L519.8 732.5 L521.2 743.2 L522.1 738.1 L523.4 735.7 L524.5 743.4 L525.4 743.0 L526.3 745.3 L527.6 745.9 L529.0 775.5 L530.3 749.9 L531.7 738.8 L532.5 743.1 L533.4 732.0 L534.8 741.0 L535.9 752.9 L537.3 751.7 L538.4 739.6 L539.8 733.1 L540.7 739.1 L541.7 740.3 L542.7 736.4 L543.6 748.1 L544.9 739.4 L546.1 744.7 L547.0 758.0 L548.1 759.6 L549.2 759.5 L550.6 743.0 L551.9 762.7 L553.2 741.2 L554.2 732.8 L555.3 735.1 L556.4 740.9 L557.4 742.2 L558.7 754.8 L559.7 739.6 L560.8 740.9 L562.0 746.0 L563.2 744.7 L564.2 768.8 L565.5 732.5 L566.5 748.0 L567.8 732.3 L569.0 746.6 L569.9 772.0 L571.1 742.6 L572.1 743.6 L573.3 736.7 L574.6 735.2 L575.8 747.3 L577.1 744.6 L578.6 730.3 L580.0 727.4 L581.0 733.2 L582.2 743.3 L583.5 746.3 L584.5 738.4 L585.9 731.2 L586.9 739.2 L588.2 734.7 L589.3 742.6 L590.7 737.2 L591.9 739.3 L593.1 768.2 L594.2 733.2 L595.6 735.3 L597.0 767.3 L598.2 732.0 L599.7 723.1 L601.1 735.5 L602.4 738.3 L603.5 734.9 L604.5 731.7 L605.4 735.0 L606.4 734.9 L607.9 737.0 L609.4 727.8 L610.6 748.3 L612.0 727.8 L613.1 730.1 L614.2 739.7 L615.3 725.8 L616.6 761.8 L617.9 731.0 L619.2 721.4 L620.6 721.3 L621.6 744.9 L622.5 722.7 L623.6 726.1 L624.9 731.1 L626.1 747.2 L627.2 737.7 L628.2 722.8 L629.6 724.0 L631.1 717.7 L632.1 723.2 L633.5 728.3 L634.7 747.6 L636.0 723.0 L637.5 723.9 L638.7 714.6 L639.9 725.3 L640.9 712.7 L642.3 718.4 L643.8 714.2 L645.1 735.7 L646.6 718.2 L647.9 747.1 L649.0 714.7 L650.1 708.3 L651.5 702.8 L652.8 714.1 L653.8 703.9 L655.0 711.9 L656.1 719.5 L657.2 711.3 L658.4 707.9 L659.7 719.4 L661.3 722.0 L662.8 713.6 L664.1 699.0 L665.6 706.1 L667.1 703.6 L668.3 697.0 L669.8 691.5 L670.8 702.2 L672.1 693.6 L673.4 689.6 L674.9 690.1 L675.8 719.0 L677.4 713.4 L678.8 712.2 L680.2 702.3 L681.2 692.7 L682.2 696.4 L683.2 691.5 L684.4 694.4 L685.5 698.6 L687.0 694.5 L688.2 696.4 L689.6 694.8 L691.0 692.1 L692.2 703.8 L693.3 699.5 L694.4 694.4 L695.7 698.9 L696.7 697.3 L697.8 714.9 L698.9 698.8 L700.3 709.7 L701.8 706.8 L703.2 702.1 L704.2 712.3 L705.6 688.6 L706.7 687.7 L708.3 695.2 L709.0 685.0 L710.5 672.0 L712.2 643.0 L713.0 670.0 L713.8 673.0 L715.0 701.0 L717.3 610.0 L719.2 522.8 L720.1 556.7 L720.8 548.5 L721.5 598.7 L723.2 631.3 L724.3 682.7 L726.7 646.5 L729.0 689.7 L731.0 680.0 L731.3 690.2 L732.6 699.1 L733.6 695.3 L734.7 689.2 L735.9 697.9 L737.5 694.3 L738.5 703.3 L740.0 702.4 L741.7 684.8 L743.3 694.9 L744.4 702.4 L746.0 695.8 L747.5 700.0 L748.7 709.7 L750.3 698.8 L751.4 696.8 L752.6 694.5 L753.6 696.8 L754.7 688.1 L756.4 699.1 L757.7 699.2 L758.9 699.8 L760.2 707.8 L761.6 694.7 L762.7 715.2 L764.2 715.9 L765.7 723.8 L767.1 716.3 L768.8 706.2 L770.1 724.6 L771.3 739.0 L772.8 725.2 L773.8 709.3 L774.9 713.9 L776.4 709.1 L777.7 720.4 L779.1 714.5 L780.4 723.0 L781.8 728.3 L783.3 738.3 L784.3 722.7 L785.5 730.9 L786.9 726.9 L788.1 738.7 L789.5 723.6 L791.0 733.1 L792.7 740.8 L794.1 730.2 L795.3 732.2 L796.4 730.8 L797.9 734.4 L799.3 766.1 L800.7 760.8 L802.0 741.6 L803.1 756.9 L804.3 761.6 L805.7 746.8 L806.9 744.6 L808.6 748.2 L809.8 755.0 L811.5 743.4 L812.6 742.9 L814.0 742.0 L815.2 745.6 L816.9 743.0 L818.2 760.5 L819.6 754.0 L821.2 754.4 L822.6 763.2 L823.9 759.6 L825.2 750.8 L826.4 753.0 L827.6 741.4 L829.1 760.6 L830.4 750.2 L831.7 745.8 L832.9 758.4 L834.4 750.4 L835.8 762.5 L836.9 756.0 L838.6 731.9 L839.1 701.6 L839.4 694.7 L840.0 706.2 L840.3 734.8 L841.9 755.0 L842.9 754.0 L844.6 752.7 L846.3 753.4 L847.4 753.0 L849.1 758.2 L850.9 766.3 L852.0 764.7 L853.2 762.1 L854.2 756.1 L855.5 760.4 L856.8 759.4 L858.4 759.7 L859.6 754.9 L861.2 760.9 L862.3 760.7 L863.9 762.2 L865.5 759.6 L867.0 763.0 L868.5 758.7 L870.2 768.2 L871.8 761.1 L873.1 763.8 L874.6 757.8 L876.0 767.3 L877.1 757.7 L878.7 771.3 L880.1 760.4 L881.5 766.3 L883.2 760.5 L884.8 768.2 L886.0 763.5 L887.3 769.9 L888.9 762.0 L890.3 769.5 L891.6 762.8 L892.8 771.6 L893.9 759.7 L895.2 768.1 L896.4 759.7 L897.6 767.7 L898.9 760.6 L900.1 770.7 L901.7 763.3 L903.4 769.3 L904.8 760.0 L906.3 770.2 L907.5 768.0 L909.4 723.0 L910.0 661.0 L910.3 646.9 L910.9 670.3 L911.4 728.9 L913.1 767.0 L913.6 761.8 L915.1 769.2 L916.8 768.4 L918.1 767.6 L919.4 761.3 L921.0 771.1 L922.1 763.8 L923.6 768.2 L924.7 761.3 L926.0 768.4 L927.5 762.2 L928.9 772.2 L930.2 762.0 L931.4 773.5 L933.2 764.0 L934.5 773.2 L935.7 764.6 L937.1 773.2 L938.6 764.1 L939.8 771.8 L941.3 767.3 L943.1 774.7 L944.8 765.4 L946.5 774.2 L948.0 767.0 L949.4 771.8 L951.0 763.9 L952.8 773.1 L954.1 766.8 L955.9 774.7 L957.0 766.8 L958.4 772.0 L959.9 756.8 L960.1 739.8 L960.4 736.0 L961.0 742.4 L961.0 758.4 L962.4 771.0 L963.2 764.8 L964.8 771.1 L966.1 763.5 L967.2 771.3 L968.3 761.5 L969.4 768.8 L970.9 763.3 L972.1 777.1 L973.6 761.9 L974.9 768.3 L976.4 760.7 L977.5 772.2 L979.1 767.4 L980.4 770.1 L981.7 764.0 L983.4 771.9 L984.9 764.3 L986.1 771.2 L987.3 763.4 L989.0 771.5 L990.7 764.1 L991.8 774.4 L993.0 767.2 L994.6 773.2 L996.2 772.0 L997.8 748.8 L998.1 719.6 L998.4 713.0 L999.0 724.0 L999.1 751.5 L1000.6 771.0 L1001.6 764.1 L1002.7 773.6 L1003.9 763.6 L1005.7 777.7 L1006.8 761.9 L1008.0 772.4 L1009.3 763.3 L1010.6 773.6 L1011.8 765.7 L1012.8 772.9 L1014.0 764.4 L1015.4 771.6 L1017.2 764.9 L1018.6 771.6 L1020.3 765.2 L1021.7 773.2 L1022.9 763.1 L1024.6 770.3 L1026.2 761.1 L1027.6 768.6 L1028.4 771.0 L1029.9 759.4 L1030.1 748.0 L1030.4 745.4 L1031.0 749.7 L1031.0 760.5 L1032.4 770.0 L1033.5 767.8 L1035.0 759.3 L1036.3 771.3 L1037.6 761.1 L1039.1 773.0 L1040.2 765.0 L1042.0 774.3 L1043.2 766.3 L1044.9 773.1 L1046.3 767.3 L1047.6 771.0 L1049.1 762.8 L1050.8 772.1 L1052.4 761.7 L1053.8 767.7 L1055.1 756.7 L1056.4 767.8 L1057.8 760.0 L1059.3 765.5 L1060.4 757.3 L1061.6 768.9 L1063.1 759.2 L1064.3 774.1 L1066.0 762.2 L1067.6 770.8 L1068.9 766.8 L1070.6 769.5 L1072.0 761.7 L1073.4 769.1 L1074.6 759.9 L1076.0 765.4 L1077.8 759.6 L1079.0 766.6 L1080.6 757.9 L1081.8 764.5 L1083.1 758.0 L1084.3 767.0 L1085.8 760.4 L1086.9 768.9 L1088.7 761.9 L1090.1 769.9 L1091.8 763.9 L1093.0 769.6 L1094.4 763.1 L1096.2 771.3 L1097.7 761.6 L1099.0 769.3 L1100.3 761.0 L1101.5 769.7 L1103.2 758.4 L1104.9 769.8 L1106.1 759.9 L1107.6 769.2 L1108.8 761.5 L1110.2 766.8 L1111.8 758.7 L1113.1 770.2 L1114.9 760.2 L1116.1 770.1 L1117.6 766.3 L1119.4 770.0 L1120.6 758.8 L1121.7 767.8 L1123.0 759.1 L1124.4 765.4 L1125.6 757.4 L1126.8 767.2 L1128.6 764.3 L1129.8 765.8 L1131.6 759.0 L1133.5 764.0 L1135.0 755.6 L1135.2 748.9 L1135.5 747.4 L1136.1 749.9 L1136.1 756.2 L1137.5 763.0 L1138.0 758.5 L1139.6 763.8 L1140.9 758.9 L1142.3 764.3 L1144.2 755.4 L1145.8 761.8 L1147.6 753.8 L1149.1 763.0 L1150.3 753.7 L1152.1 760.0 L1153.4 752.2 L1155.0 760.0 L1156.3 754.5 L1158.0 762.1 L1159.3 751.9 L1160.6 760.5 L1162.5 754.2 L1163.7 762.3 L1165.1 753.7 L1166.5 762.4 L1168.0 754.9 L1169.4 761.3 L1171.1 761.6 L1172.3 764.0 L1173.9 755.4 L1175.2 764.2 L1176.3 756.0 L1177.5 762.4 L1179.3 754.0 L1180.4 760.9 L1181.9 753.2 L1183.2 760.9 L1184.6 751.0 L1186.0 758.8 L1187.3 751.3 L1188.7 758.5 L1190.3 748.7 L1191.9 757.2 L1193.2 750.0 L1194.9 761.6 L1196.0 751.3 L1197.2 759.6 L1198.6 753.1 L1200.4 758.4 L1201.7 751.0 L1203.4 758.1 L1204.6 746.7 L1206.4 754.1 L1207.8 745.4 L1209.4 752.2 L1211.2 742.7 L1212.8 748.0 L1214.5 740.9 L1216.1 748.2 L1217.6 737.8 L1219.2 746.9 L1221.0 736.9 L1222.6 743.3 L1224.2 734.5 L1225.7 741.2 L1226.8 733.6 L1228.5 741.3 L1229.9 741.9 L1231.8 743.0 L1233.4 736.1 L1235.1 743.5 L1236.3 738.0 L1238.0 744.7 L1239.7 734.0 L1240.9 741.9 L1242.8 733.3 L1244.0 745.6 L1245.3 730.0 L1247.0 738.8 L1248.5 727.7 L1249.8 736.4 L1251.3 728.4 L1252.9 736.8 L1254.1 728.9 L1255.6 735.0 L1256.9 727.0 L1258.2 737.9 L1259.7 728.7 L1261.4 739.2 L1262.8 731.5 L1264.1 740.4 L1265.3 732.3" fill="none" stroke="#F8F4B0" stroke-width="1" shape-rendering="crispEdges" clip-path="url(#c508)"/></svg>
<div style="left:396px;top:2px;width:256px;height:127px;background:#0A3DE0;border-radius:6px 6px 0 0;border:1px solid #0026B8"></div>
<div style="left:397px;top:3px;width:254px;height:28px;background:linear-gradient(#3A7FF2 0px,#2D6FEE 2px,#0D55E6 6px,#0350E4 18px,#0248D8 26px,#0742CC 30px);border-radius:5px 5px 0 0"></div>
<svg style="left:402px;top:9px" width="16" height="16" viewBox="0 0 16 16"><rect x="0.5" y="0.5" width="15" height="15" fill="#fff" stroke="#000" stroke-width="1.2"/><path d="M2.5 10L5 6 6.5 10 9 6 10.5 10 13 6" stroke="#303030" stroke-width="1" fill="none"/></svg>
<div class="t" style="left:422px;top:12px;font-size:13.5px;font-weight:bold;color:#FFFFFF">Total Pwr</div>
<div style="left:625px;top:8px;width:21px;height:21px;border-radius:3px;border:1px solid #F4F0F0;background:linear-gradient(135deg,#F0A080,#E0603A 45%,#D24A22)"><svg width="19" height="19" style="left:0;top:0"><path d="M4.5 4.5L14.5 14.5M14.5 4.5L4.5 14.5" stroke="#fff" stroke-width="1.9"/></svg></div>
<div style="left:400px;top:32px;width:248px;height:93px;background:#ECE9D8;border-top:1px solid #C8D8F8;border-left:1px solid #F0F2FC"></div>
<div class="t" style="left:407.3px;top:35px;font-size:42px;color:#000;-webkit-text-stroke:0.3px #ECE9D8;transform:scaleX(0.868);transform-origin:0 0">-5.47 dBV rms</div>
<div class="t" style="left:407.3px;top:78px;font-size:42px;color:#000;-webkit-text-stroke:0.3px #ECE9D8;transform:scaleX(0.868);transform-origin:0 0">-5.40 dBV rms</div>
<div style="left:651px;top:2px;width:257px;height:127px;background:#7886DC;border-radius:6px 6px 0 0;border:1px solid #6570C8"></div>
<div style="left:652px;top:3px;width:255px;height:28px;background:linear-gradient(#8CA2EA 0px,#A4B8F2 2px,#90A8EC 5px,#7F98E2 14px,#7C94E0 24px,#7088D8 29px);border-radius:5px 5px 0 0"></div>
<svg style="left:657px;top:9px" width="16" height="16" viewBox="0 0 16 16"><rect x="0.5" y="0.5" width="15" height="15" fill="#fff" stroke="#000" stroke-width="1.2"/><path d="M2.5 10L5 6 6.5 10 9 6 10.5 10 13 6" stroke="#303030" stroke-width="1" fill="none"/></svg>
<div class="t" style="left:677px;top:12px;font-size:13.5px;font-weight:bold;color:#D3DEF8">Peak Amplitude</div>
<div style="left:881px;top:8px;width:21px;height:21px;border-radius:3px;border:1px solid #D6CCF0;background:linear-gradient(135deg,#D89898,#C46A6A 50%,#BC5E5E)"><svg width="19" height="19" style="left:0;top:0"><path d="M4.5 4.5L14.5 14.5M14.5 4.5L4.5 14.5" stroke="#fff" stroke-width="1.9"/></svg></div>
<div style="left:655px;top:31px;width:249px;height:94px;background:#ECE9D8;border-top:1px solid #E8ECFA;border-left:1px solid #F0F2FC"></div>
<div class="t" style="left:663.3px;top:35px;font-size:42px;color:#000;-webkit-text-stroke:0.3px #ECE9D8;transform:scaleX(0.864);transform-origin:0 0">-5.69 dBV rms</div>
<div class="t" style="left:663.3px;top:78px;font-size:42px;color:#000;-webkit-text-stroke:0.3px #ECE9D8;transform:scaleX(0.864);transform-origin:0 0">-5.63 dBV rms</div>
<div style="left:907px;top:2px;width:256px;height:127px;background:#7886DC;border-radius:6px 6px 0 0;border:1px solid #6570C8"></div>
<div style="left:908px;top:3px;width:254px;height:28px;background:linear-gradient(#8CA2EA 0px,#A4B8F2 2px,#90A8EC 5px,#7F98E2 14px,#7C94E0 24px,#7088D8 29px);border-radius:5px 5px 0 0"></div>
<svg style="left:913px;top:9px" width="16" height="16" viewBox="0 0 16 16"><rect x="0.5" y="0.5" width="15" height="15" fill="#fff" stroke="#000" stroke-width="1.2"/><path d="M2.5 10L5 6 6.5 10 9 6 10.5 10 13 6" stroke="#303030" stroke-width="1" fill="none"/></svg>
<div class="t" style="left:933px;top:12px;font-size:13.5px;font-weight:bold;color:#D3DEF8">Peak Frequency</div>
<div style="left:1136px;top:8px;width:21px;height:21px;border-radius:3px;border:1px solid #D6CCF0;background:linear-gradient(135deg,#D89898,#C46A6A 50%,#BC5E5E)"><svg width="19" height="19" style="left:0;top:0"><path d="M4.5 4.5L14.5 14.5M14.5 4.5L4.5 14.5" stroke="#fff" stroke-width="1.9"/></svg></div>
<div style="left:911px;top:31px;width:248px;height:94px;background:#ECE9D8;border-top:1px solid #E8ECFA;border-left:1px solid #F0F2FC"></div>
<div class="t" style="left:919.8px;top:34px;font-size:42px;color:#000;-webkit-text-stroke:0.3px #ECE9D8;transform:scaleX(1.076);transform-origin:0 0">1017.33 Hz</div>
<div class="t" style="left:919.8px;top:77px;font-size:42px;color:#000;-webkit-text-stroke:0.3px #ECE9D8;transform:scaleX(1.076);transform-origin:0 0">1017.33 Hz</div>
<div style="left:1162px;top:2px;width:208px;height:127px;background:#7886DC;border-radius:6px 6px 0 0;border:1px solid #6570C8"></div>
<div style="left:1163px;top:3px;width:206px;height:28px;background:linear-gradient(#8CA2EA 0px,#A4B8F2 2px,#90A8EC 5px,#7F98E2 14px,#7C94E0 24px,#7088D8 29px);border-radius:5px 5px 0 0"></div>
<svg style="left:1168px;top:9px" width="16" height="16" viewBox="0 0 16 16"><rect x="0.5" y="0.5" width="15" height="15" fill="#fff" stroke="#000" stroke-width="1.2"/><path d="M2.5 10L5 6 6.5 10 9 6 10.5 10 13 6" stroke="#303030" stroke-width="1" fill="none"/></svg>
<div class="t" style="left:1188px;top:12px;font-size:13.5px;font-weight:bold;color:#D3DEF8">THD</div>
<div style="left:1343px;top:8px;width:21px;height:21px;border-radius:3px;border:1px solid #D6CCF0;background:linear-gradient(135deg,#D89898,#C46A6A 50%,#BC5E5E)"><svg width="19" height="19" style="left:0;top:0"><path d="M4.5 4.5L14.5 14.5M14.5 4.5L4.5 14.5" stroke="#fff" stroke-width="1.9"/></svg></div>
<div style="left:1166px;top:31px;width:200px;height:94px;background:#ECE9D8;border-top:1px solid #E8ECFA;border-left:1px solid #F0F2FC"></div>
<div class="t" style="left:1171.1px;top:34px;font-size:42px;color:#000;-webkit-text-stroke:0.3px #ECE9D8;transform:scaleX(0.949);transform-origin:0 0">0.45051 %</div>
<div class="t" style="left:1171.1px;top:77px;font-size:42px;color:#000;-webkit-text-stroke:0.3px #ECE9D8;transform:scaleX(0.949);transform-origin:0 0">0.47623 %</div>
<div style="left:648px;top:6px;width:4px;height:123px;background:#0A3DE0;border-right:1px solid #0026B8"></div>
</body></html>
